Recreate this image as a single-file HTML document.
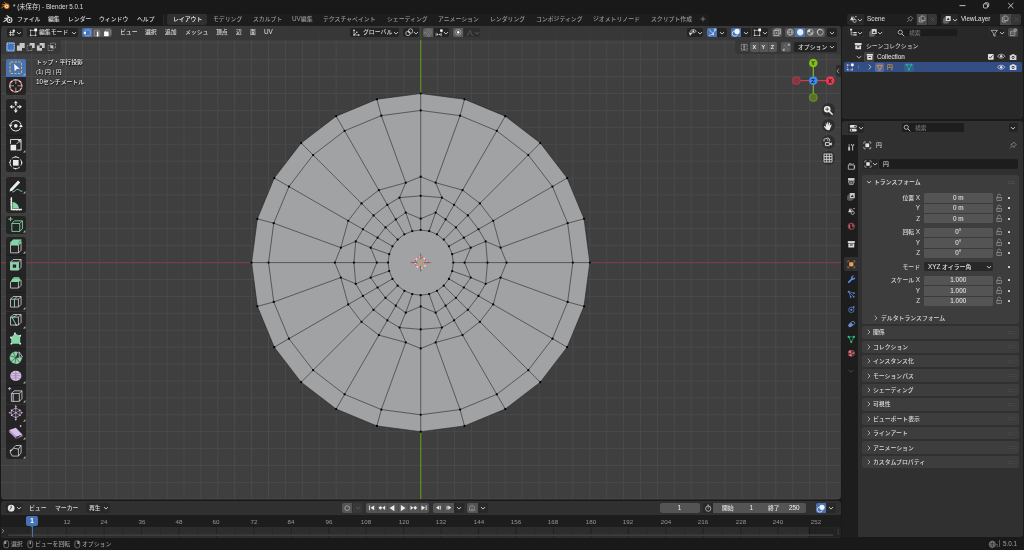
<!DOCTYPE html>
<html lang="ja"><head><meta charset="utf-8"><title>* (未保存) - Blender 5.0.1</title>
<style>
html,body{margin:0;padding:0;}
body{width:1024px;height:550px;overflow:hidden;position:relative;background:#191919;font-family:"Liberation Sans","Noto Sans CJK JP",sans-serif;-webkit-font-smoothing:antialiased;}
body>div,body>span,body>svg{position:absolute;display:block;}
.t{white-space:nowrap;height:10px;will-change:transform;font-weight:500;}
.l{font-size:1.08em;-webkit-text-stroke:0.05px currentColor;}
svg{overflow:visible;}
</style></head><body>
<div style="left:0px;top:0px;width:1024px;height:13px;background:#191919;"></div>
<div style="left:0px;top:13px;width:1024px;height:13px;background:#191919;"></div>
<div style="left:163.5px;top:14px;width:545px;height:12px;background:#1d1d1d;border-radius:0 3px 0 0;"></div>
<svg style="left:0px;top:0px;" width="1024" height="550" viewBox="0 0 1024 550"><defs><clipPath id="vpc"><rect x="1.1" y="26" width="839.7" height="473.3" rx="3.2"/></clipPath></defs><g clip-path="url(#vpc)"><rect x="0" y="20" width="845" height="485" fill="#3f3f3f"/><path d="M-2.05 26.0 V499.3 M14.86 26.0 V499.3 M31.77 26.0 V499.3 M48.68 26.0 V499.3 M65.59 26.0 V499.3 M82.50 26.0 V499.3 M99.41 26.0 V499.3 M116.32 26.0 V499.3 M133.23 26.0 V499.3 M150.14 26.0 V499.3 M167.05 26.0 V499.3 M183.96 26.0 V499.3 M200.87 26.0 V499.3 M217.78 26.0 V499.3 M234.69 26.0 V499.3 M251.60 26.0 V499.3 M268.51 26.0 V499.3 M285.42 26.0 V499.3 M302.33 26.0 V499.3 M319.24 26.0 V499.3 M336.15 26.0 V499.3 M353.06 26.0 V499.3 M369.97 26.0 V499.3 M386.88 26.0 V499.3 M403.79 26.0 V499.3 M420.70 26.0 V499.3 M437.61 26.0 V499.3 M454.52 26.0 V499.3 M471.43 26.0 V499.3 M488.34 26.0 V499.3 M505.25 26.0 V499.3 M522.16 26.0 V499.3 M539.07 26.0 V499.3 M555.98 26.0 V499.3 M572.89 26.0 V499.3 M589.80 26.0 V499.3 M606.71 26.0 V499.3 M623.62 26.0 V499.3 M640.53 26.0 V499.3 M657.44 26.0 V499.3 M674.35 26.0 V499.3 M691.26 26.0 V499.3 M708.17 26.0 V499.3 M725.08 26.0 V499.3 M741.99 26.0 V499.3 M758.90 26.0 V499.3 M775.81 26.0 V499.3 M792.72 26.0 V499.3 M809.63 26.0 V499.3 M826.54 26.0 V499.3 M843.45 26.0 V499.3 M1.1 25.86 H840.8 M1.1 42.77 H840.8 M1.1 59.68 H840.8 M1.1 76.59 H840.8 M1.1 93.50 H840.8 M1.1 110.41 H840.8 M1.1 127.32 H840.8 M1.1 144.23 H840.8 M1.1 161.14 H840.8 M1.1 178.05 H840.8 M1.1 194.96 H840.8 M1.1 211.87 H840.8 M1.1 228.78 H840.8 M1.1 245.69 H840.8 M1.1 262.60 H840.8 M1.1 279.51 H840.8 M1.1 296.42 H840.8 M1.1 313.33 H840.8 M1.1 330.24 H840.8 M1.1 347.15 H840.8 M1.1 364.06 H840.8 M1.1 380.97 H840.8 M1.1 397.88 H840.8 M1.1 414.79 H840.8 M1.1 431.70 H840.8 M1.1 448.61 H840.8 M1.1 465.52 H840.8 M1.1 482.43 H840.8 M1.1 499.34 H840.8" stroke="#4a4a4a" stroke-width="1" fill="none"/><path d="M1.1 262.60 H840.8" stroke="#7c3b48" stroke-width="1.3" fill="none"/><path d="M420.70 26.0 V499.3" stroke="#5e8b1f" stroke-width="1.3" fill="none"/><polygon points="420.70,93.50 464.47,99.26 505.25,116.16 540.27,143.03 567.14,178.05 584.04,218.83 589.80,262.60 584.04,306.37 567.14,347.15 540.27,382.17 505.25,409.04 464.47,425.94 420.70,431.70 376.93,425.94 336.15,409.04 301.13,382.17 274.26,347.15 257.36,306.37 251.60,262.60 257.36,218.83 274.26,178.05 301.13,143.03 336.15,116.16 376.93,99.26" fill="#a1a2a4"/>
<path d="M420.70 230.00 L429.14 231.11 L437.00 234.37 L443.75 239.55 L448.93 246.30 L452.19 254.16 L453.30 262.60 L452.19 271.04 L448.93 278.90 L443.75 285.65 L437.00 290.83 L429.14 294.09 L420.70 295.20 L412.26 294.09 L404.40 290.83 L397.65 285.65 L392.47 278.90 L389.21 271.04 L388.10 262.60 L389.21 254.16 L392.47 246.30 L397.65 239.55 L404.40 234.37 L412.26 231.11Z M420.70 218.73 L435.64 212.55 L445.60 219.47 L455.91 227.39 L463.83 237.70 L470.75 247.66 L464.57 262.60 L470.75 277.54 L463.83 287.50 L455.91 297.81 L445.60 305.73 L435.64 312.65 L420.70 306.47 L405.76 312.65 L395.80 305.73 L385.49 297.81 L377.57 287.50 L370.65 277.54 L376.83 262.60 L370.65 247.66 L377.57 237.70 L385.49 227.39 L395.80 219.47 L405.76 212.55Z M420.70 195.82 L441.90 197.64 L454.05 204.84 L467.86 215.44 L478.46 229.25 L485.66 241.40 L487.48 262.60 L485.66 283.80 L478.46 295.95 L467.86 309.76 L454.05 320.36 L441.90 327.56 L420.70 329.38 L399.50 327.56 L387.35 320.36 L373.54 309.76 L362.94 295.95 L355.74 283.80 L353.92 262.60 L355.74 241.40 L362.94 229.25 L373.54 215.44 L387.35 204.84 L399.50 197.64Z M420.70 176.73 L435.64 182.73 L462.55 190.11 L479.88 203.42 L493.19 220.75 L500.57 247.66 L506.57 262.60 L500.57 277.54 L493.19 304.45 L479.88 321.78 L462.55 335.09 L435.64 342.47 L420.70 348.47 L405.76 342.47 L378.85 335.09 L361.52 321.78 L348.21 304.45 L340.83 277.54 L334.83 262.60 L340.83 247.66 L348.21 220.75 L361.52 203.42 L378.85 190.11 L405.76 182.73Z M420.70 110.45 L460.08 115.63 L496.77 130.83 L528.29 155.01 L552.47 186.53 L567.67 223.22 L572.85 262.60 L567.67 301.98 L552.47 338.68 L528.29 370.19 L496.77 394.37 L460.08 409.57 L420.70 414.75 L381.32 409.57 L344.62 394.37 L313.11 370.19 L288.93 338.68 L273.73 301.98 L268.55 262.60 L273.73 223.22 L288.93 186.53 L313.11 155.01 L344.62 130.83 L381.32 115.63Z M420.70 93.50 L464.47 99.26 L505.25 116.16 L540.27 143.03 L567.14 178.05 L584.04 218.83 L589.80 262.60 L584.04 306.37 L567.14 347.15 L540.27 382.17 L505.25 409.04 L464.47 425.94 L420.70 431.70 L376.93 425.94 L336.15 409.04 L301.13 382.17 L274.26 347.15 L257.36 306.37 L251.60 262.60 L257.36 218.83 L274.26 178.05 L301.13 143.03 L336.15 116.16 L376.93 99.26Z M420.70 230.00 L420.70 218.73 L420.70 195.82 L420.70 176.73 L420.70 110.45 L420.70 93.50 M429.14 231.11 L435.64 212.55 L441.90 197.64 L435.64 182.73 L460.08 115.63 L464.47 99.26 M437.00 234.37 L445.60 219.47 L454.05 204.84 L462.55 190.11 L496.77 130.83 L505.25 116.16 M443.75 239.55 L455.91 227.39 L467.86 215.44 L479.88 203.42 L528.29 155.01 L540.27 143.03 M448.93 246.30 L463.83 237.70 L478.46 229.25 L493.19 220.75 L552.47 186.53 L567.14 178.05 M452.19 254.16 L470.75 247.66 L485.66 241.40 L500.57 247.66 L567.67 223.22 L584.04 218.83 M453.30 262.60 L464.57 262.60 L487.48 262.60 L506.57 262.60 L572.85 262.60 L589.80 262.60 M452.19 271.04 L470.75 277.54 L485.66 283.80 L500.57 277.54 L567.67 301.98 L584.04 306.37 M448.93 278.90 L463.83 287.50 L478.46 295.95 L493.19 304.45 L552.47 338.68 L567.14 347.15 M443.75 285.65 L455.91 297.81 L467.86 309.76 L479.88 321.78 L528.29 370.19 L540.27 382.17 M437.00 290.83 L445.60 305.73 L454.05 320.36 L462.55 335.09 L496.77 394.37 L505.25 409.04 M429.14 294.09 L435.64 312.65 L441.90 327.56 L435.64 342.47 L460.08 409.57 L464.47 425.94 M420.70 295.20 L420.70 306.47 L420.70 329.38 L420.70 348.47 L420.70 414.75 L420.70 431.70 M412.26 294.09 L405.76 312.65 L399.50 327.56 L405.76 342.47 L381.32 409.57 L376.93 425.94 M404.40 290.83 L395.80 305.73 L387.35 320.36 L378.85 335.09 L344.62 394.37 L336.15 409.04 M397.65 285.65 L385.49 297.81 L373.54 309.76 L361.52 321.78 L313.11 370.19 L301.13 382.17 M392.47 278.90 L377.57 287.50 L362.94 295.95 L348.21 304.45 L288.93 338.68 L274.26 347.15 M389.21 271.04 L370.65 277.54 L355.74 283.80 L340.83 277.54 L273.73 301.98 L257.36 306.37 M388.10 262.60 L376.83 262.60 L353.92 262.60 L334.83 262.60 L268.55 262.60 L251.60 262.60 M389.21 254.16 L370.65 247.66 L355.74 241.40 L340.83 247.66 L273.73 223.22 L257.36 218.83 M392.47 246.30 L377.57 237.70 L362.94 229.25 L348.21 220.75 L288.93 186.53 L274.26 178.05 M397.65 239.55 L385.49 227.39 L373.54 215.44 L361.52 203.42 L313.11 155.01 L301.13 143.03 M404.40 234.37 L395.80 219.47 L387.35 204.84 L378.85 190.11 L344.62 130.83 L336.15 116.16 M412.26 231.11 L405.76 212.55 L399.50 197.64 L405.76 182.73 L381.32 115.63 L376.93 99.26" fill="none" stroke="#1c1c1c" stroke-width="0.55"/>
<g fill="#000"><circle cx="420.70" cy="230.00" r="1.12"/><circle cx="429.14" cy="231.11" r="1.12"/><circle cx="437.00" cy="234.37" r="1.12"/><circle cx="443.75" cy="239.55" r="1.12"/><circle cx="448.93" cy="246.30" r="1.12"/><circle cx="452.19" cy="254.16" r="1.12"/><circle cx="453.30" cy="262.60" r="1.12"/><circle cx="452.19" cy="271.04" r="1.12"/><circle cx="448.93" cy="278.90" r="1.12"/><circle cx="443.75" cy="285.65" r="1.12"/><circle cx="437.00" cy="290.83" r="1.12"/><circle cx="429.14" cy="294.09" r="1.12"/><circle cx="420.70" cy="295.20" r="1.12"/><circle cx="412.26" cy="294.09" r="1.12"/><circle cx="404.40" cy="290.83" r="1.12"/><circle cx="397.65" cy="285.65" r="1.12"/><circle cx="392.47" cy="278.90" r="1.12"/><circle cx="389.21" cy="271.04" r="1.12"/><circle cx="388.10" cy="262.60" r="1.12"/><circle cx="389.21" cy="254.16" r="1.12"/><circle cx="392.47" cy="246.30" r="1.12"/><circle cx="397.65" cy="239.55" r="1.12"/><circle cx="404.40" cy="234.37" r="1.12"/><circle cx="412.26" cy="231.11" r="1.12"/><circle cx="420.70" cy="218.73" r="1.12"/><circle cx="435.64" cy="212.55" r="1.12"/><circle cx="445.60" cy="219.47" r="1.12"/><circle cx="455.91" cy="227.39" r="1.12"/><circle cx="463.83" cy="237.70" r="1.12"/><circle cx="470.75" cy="247.66" r="1.12"/><circle cx="464.57" cy="262.60" r="1.12"/><circle cx="470.75" cy="277.54" r="1.12"/><circle cx="463.83" cy="287.50" r="1.12"/><circle cx="455.91" cy="297.81" r="1.12"/><circle cx="445.60" cy="305.73" r="1.12"/><circle cx="435.64" cy="312.65" r="1.12"/><circle cx="420.70" cy="306.47" r="1.12"/><circle cx="405.76" cy="312.65" r="1.12"/><circle cx="395.80" cy="305.73" r="1.12"/><circle cx="385.49" cy="297.81" r="1.12"/><circle cx="377.57" cy="287.50" r="1.12"/><circle cx="370.65" cy="277.54" r="1.12"/><circle cx="376.83" cy="262.60" r="1.12"/><circle cx="370.65" cy="247.66" r="1.12"/><circle cx="377.57" cy="237.70" r="1.12"/><circle cx="385.49" cy="227.39" r="1.12"/><circle cx="395.80" cy="219.47" r="1.12"/><circle cx="405.76" cy="212.55" r="1.12"/><circle cx="420.70" cy="195.82" r="1.12"/><circle cx="441.90" cy="197.64" r="1.12"/><circle cx="454.05" cy="204.84" r="1.12"/><circle cx="467.86" cy="215.44" r="1.12"/><circle cx="478.46" cy="229.25" r="1.12"/><circle cx="485.66" cy="241.40" r="1.12"/><circle cx="487.48" cy="262.60" r="1.12"/><circle cx="485.66" cy="283.80" r="1.12"/><circle cx="478.46" cy="295.95" r="1.12"/><circle cx="467.86" cy="309.76" r="1.12"/><circle cx="454.05" cy="320.36" r="1.12"/><circle cx="441.90" cy="327.56" r="1.12"/><circle cx="420.70" cy="329.38" r="1.12"/><circle cx="399.50" cy="327.56" r="1.12"/><circle cx="387.35" cy="320.36" r="1.12"/><circle cx="373.54" cy="309.76" r="1.12"/><circle cx="362.94" cy="295.95" r="1.12"/><circle cx="355.74" cy="283.80" r="1.12"/><circle cx="353.92" cy="262.60" r="1.12"/><circle cx="355.74" cy="241.40" r="1.12"/><circle cx="362.94" cy="229.25" r="1.12"/><circle cx="373.54" cy="215.44" r="1.12"/><circle cx="387.35" cy="204.84" r="1.12"/><circle cx="399.50" cy="197.64" r="1.12"/><circle cx="420.70" cy="176.73" r="1.12"/><circle cx="435.64" cy="182.73" r="1.12"/><circle cx="462.55" cy="190.11" r="1.12"/><circle cx="479.88" cy="203.42" r="1.12"/><circle cx="493.19" cy="220.75" r="1.12"/><circle cx="500.57" cy="247.66" r="1.12"/><circle cx="506.57" cy="262.60" r="1.12"/><circle cx="500.57" cy="277.54" r="1.12"/><circle cx="493.19" cy="304.45" r="1.12"/><circle cx="479.88" cy="321.78" r="1.12"/><circle cx="462.55" cy="335.09" r="1.12"/><circle cx="435.64" cy="342.47" r="1.12"/><circle cx="420.70" cy="348.47" r="1.12"/><circle cx="405.76" cy="342.47" r="1.12"/><circle cx="378.85" cy="335.09" r="1.12"/><circle cx="361.52" cy="321.78" r="1.12"/><circle cx="348.21" cy="304.45" r="1.12"/><circle cx="340.83" cy="277.54" r="1.12"/><circle cx="334.83" cy="262.60" r="1.12"/><circle cx="340.83" cy="247.66" r="1.12"/><circle cx="348.21" cy="220.75" r="1.12"/><circle cx="361.52" cy="203.42" r="1.12"/><circle cx="378.85" cy="190.11" r="1.12"/><circle cx="405.76" cy="182.73" r="1.12"/><circle cx="420.70" cy="110.45" r="1.12"/><circle cx="460.08" cy="115.63" r="1.12"/><circle cx="496.77" cy="130.83" r="1.12"/><circle cx="528.29" cy="155.01" r="1.12"/><circle cx="552.47" cy="186.53" r="1.12"/><circle cx="567.67" cy="223.22" r="1.12"/><circle cx="572.85" cy="262.60" r="1.12"/><circle cx="567.67" cy="301.98" r="1.12"/><circle cx="552.47" cy="338.68" r="1.12"/><circle cx="528.29" cy="370.19" r="1.12"/><circle cx="496.77" cy="394.37" r="1.12"/><circle cx="460.08" cy="409.57" r="1.12"/><circle cx="420.70" cy="414.75" r="1.12"/><circle cx="381.32" cy="409.57" r="1.12"/><circle cx="344.62" cy="394.37" r="1.12"/><circle cx="313.11" cy="370.19" r="1.12"/><circle cx="288.93" cy="338.68" r="1.12"/><circle cx="273.73" cy="301.98" r="1.12"/><circle cx="268.55" cy="262.60" r="1.12"/><circle cx="273.73" cy="223.22" r="1.12"/><circle cx="288.93" cy="186.53" r="1.12"/><circle cx="313.11" cy="155.01" r="1.12"/><circle cx="344.62" cy="130.83" r="1.12"/><circle cx="381.32" cy="115.63" r="1.12"/><circle cx="420.70" cy="93.50" r="1.12"/><circle cx="464.47" cy="99.26" r="1.12"/><circle cx="505.25" cy="116.16" r="1.12"/><circle cx="540.27" cy="143.03" r="1.12"/><circle cx="567.14" cy="178.05" r="1.12"/><circle cx="584.04" cy="218.83" r="1.12"/><circle cx="589.80" cy="262.60" r="1.12"/><circle cx="584.04" cy="306.37" r="1.12"/><circle cx="567.14" cy="347.15" r="1.12"/><circle cx="540.27" cy="382.17" r="1.12"/><circle cx="505.25" cy="409.04" r="1.12"/><circle cx="464.47" cy="425.94" r="1.12"/><circle cx="420.70" cy="431.70" r="1.12"/><circle cx="376.93" cy="425.94" r="1.12"/><circle cx="336.15" cy="409.04" r="1.12"/><circle cx="301.13" cy="382.17" r="1.12"/><circle cx="274.26" cy="347.15" r="1.12"/><circle cx="257.36" cy="306.37" r="1.12"/><circle cx="251.60" cy="262.60" r="1.12"/><circle cx="257.36" cy="218.83" r="1.12"/><circle cx="274.26" cy="178.05" r="1.12"/><circle cx="301.13" cy="143.03" r="1.12"/><circle cx="336.15" cy="116.16" r="1.12"/><circle cx="376.93" cy="99.26" r="1.12"/></g><circle cx="420.70" cy="262.60" r="5.5" fill="none" stroke="#e8e8e8" stroke-width="1.1"/><circle cx="420.70" cy="262.60" r="5.5" fill="none" stroke="#e0424c" stroke-width="1.1" stroke-dasharray="2.16 2.16"/><path d="M420.70 259.30 v-5.8 M420.70 265.90 v5.8 M417.40 262.60 h-5.8 M424.00 262.60 h5.8" stroke="#444" stroke-width="0.65"/><path d="M420.70 253.60 v-1.6 M420.70 271.60 v1.6" stroke="#7fc24a" stroke-width="0.9"/><path d="M411.70 262.60 h-1.6 M429.70 262.60 h1.6" stroke="#d8505a" stroke-width="0.9"/><circle cx="420.70" cy="262.60" r="1.5" fill="#f5921e"/></g><rect x="1.5" y="26.4" width="838.9" height="472.5" rx="2.9" fill="none" stroke="rgba(255,255,255,0.045)" stroke-width="0.8"/></svg>
<div style="left:1.1px;top:26px;width:839.7px;height:14.3px;background:rgba(52,52,52,0.73);border-radius:3.2px 3.2px 0 0;"></div>
<div style="left:1.1px;top:40.3px;width:60.4px;height:13.8px;background:rgba(52,52,52,0.73);border-radius:0 0 3px 0;"></div>
<div style="left:735px;top:40.3px;width:105.8px;height:13.8px;background:rgba(52,52,52,0.73);border-radius:0 0 0 3px;"></div>
<div style="left:7px;top:28px;width:15.6px;height:9.4px;background:rgba(30,30,30,0.78);border-radius:2px;"></div>
<svg style="left:8.3px;top:28.7px;" width="8" height="8" viewBox="0 0 16 16"><path d="M5 3 V14 M10 6 V14 M2 7 H13 M2 11.5 H13" stroke="#e6e6e6" stroke-width="1.3" fill="none"/><circle cx="11.5" cy="3.5" r="2.6" fill="#e6e6e6"/></svg>
<svg style="left:16.3px;top:29.7px;" width="6" height="6" viewBox="0 0 6 6"><path d="M1.25 2.30 L3 4.10 L4.75 2.30" fill="none" stroke="#c8c8c8" stroke-width="0.95" stroke-linecap="round" stroke-linejoin="round"/></svg>
<div style="left:27px;top:28px;width:51.3px;height:9.4px;background:rgba(30,30,30,0.78);border-radius:2px;"></div>
<svg style="left:28.75px;top:28.45px;" width="8.5" height="8.5" viewBox="0 0 16 16"><rect x="3" y="4.5" width="9.5" height="9.5" rx="1.5" fill="none" stroke="#dcdcdc" stroke-width="1.1"/><rect x="1.6" y="3" width="2.6" height="2.6" fill="#dcdcdc"/><rect x="1.6" y="12.6" width="2.6" height="2.6" fill="#dcdcdc"/><rect x="11.2" y="12.6" width="2.6" height="2.6" fill="#dcdcdc"/><rect x="10" y="1" width="5.2" height="5.2" fill="#fff"/></svg>
<span class="t" style="left:39.3px;top:27.3px;line-height:10px;font-size:5.87px;color:#dadada;">編集モード</span>
<svg style="left:71px;top:29.7px;" width="6" height="6" viewBox="0 0 6 6"><path d="M1.25 2.30 L3 4.10 L4.75 2.30" fill="none" stroke="#c8c8c8" stroke-width="0.95" stroke-linecap="round" stroke-linejoin="round"/></svg>
<div style="left:82px;top:28px;width:9.6px;height:9.4px;background:#4772b3;border-radius:2px 0 0 2px;"></div>
<div style="left:92.1px;top:28px;width:9.5px;height:9.4px;background:#565656;"></div>
<div style="left:102.1px;top:28px;width:9.9px;height:9.4px;background:#565656;border-radius:0 2px 2px 0;"></div>
<svg style="left:82.8px;top:28.7px;" width="8" height="8" viewBox="0 0 16 16"><rect x="4" y="2" width="10.5" height="11.5" rx="2.2" fill="none" stroke="#e8e8e8" stroke-width="1.1" opacity="0.75"/><rect x="1.6" y="5.6" width="4.2" height="4.2" fill="#fff"/></svg>
<svg style="left:92.8px;top:28.7px;" width="8" height="8" viewBox="0 0 16 16"><rect x="2.6" y="2.4" width="10.8" height="11.6" rx="2.4" fill="none" stroke="#e0e0e0" stroke-width="1.1" opacity="0.65"/><rect x="7.6" y="5" width="3.2" height="9.8" fill="#fff"/></svg>
<svg style="left:103px;top:28.7px;" width="8" height="8" viewBox="0 0 16 16"><rect x="5" y="1.6" width="9.6" height="9.6" rx="2.2" fill="none" stroke="#e0e0e0" stroke-width="1.1" opacity="0.65"/><rect x="2.2" y="5" width="9" height="9.4" fill="#fff"/></svg>
<span class="t" style="left:119.8px;top:27.3px;line-height:10px;font-size:5.87px;color:#dadada;">ビュー</span>
<span class="t" style="left:144.8px;top:27.3px;line-height:10px;font-size:5.87px;color:#dadada;">選択</span>
<span class="t" style="left:164.8px;top:27.3px;line-height:10px;font-size:5.87px;color:#dadada;">追加</span>
<span class="t" style="left:184.8px;top:27.3px;line-height:10px;font-size:5.87px;color:#dadada;">メッシュ</span>
<span class="t" style="left:215.8px;top:27.3px;line-height:10px;font-size:5.87px;color:#dadada;">頂点</span>
<span class="t" style="left:235.6px;top:27.3px;line-height:10px;font-size:5.87px;color:#dadada;">辺</span>
<span class="t" style="left:249.6px;top:27.3px;line-height:10px;font-size:5.87px;color:#dadada;">面</span>
<span class="t" style="left:263.6px;top:27.3px;line-height:10px;font-size:5.87px;color:#dadada;"><span class="l">UV</span></span>
<div style="left:350px;top:28px;width:49.3px;height:9.4px;background:rgba(30,30,30,0.78);border-radius:2px;"></div>
<svg style="left:351.5px;top:28.7px;" width="8" height="8" viewBox="0 0 16 16"><path d="M4 2 V12 H14" fill="none" stroke="#e0e0e0" stroke-width="1.3"/><path d="M4 12 L9 7" stroke="#e0e0e0" stroke-width="1.2"/><circle cx="4" cy="2.5" r="1.7" fill="#e0e0e0"/><circle cx="13.5" cy="12" r="1.7" fill="#e0e0e0"/><circle cx="9.5" cy="6.5" r="1.5" fill="#e0e0e0"/><circle cx="4" cy="12" r="1.6" fill="#e0e0e0"/></svg>
<span class="t" style="left:362.8px;top:27.3px;line-height:10px;font-size:5.87px;color:#dadada;">グローバル</span>
<svg style="left:392.5px;top:29.7px;" width="6" height="6" viewBox="0 0 6 6"><path d="M1.25 2.30 L3 4.10 L4.75 2.30" fill="none" stroke="#c8c8c8" stroke-width="0.95" stroke-linecap="round" stroke-linejoin="round"/></svg>
<div style="left:403px;top:28px;width:16.3px;height:9.4px;background:rgba(30,30,30,0.78);border-radius:2px;"></div>
<svg style="left:404.55px;top:28.45px;" width="8.5" height="8.5" viewBox="0 0 16 16"><circle cx="5.6" cy="10.2" r="4.2" fill="none" stroke="#e0e0e0" stroke-width="1.3"/><circle cx="10.4" cy="5.8" r="4.2" fill="none" stroke="#e0e0e0" stroke-width="1.3"/><circle cx="8" cy="8" r="1.3" fill="#e0e0e0"/></svg>
<svg style="left:413px;top:29.7px;" width="6" height="6" viewBox="0 0 6 6"><path d="M1.25 2.30 L3 4.10 L4.75 2.30" fill="none" stroke="#c8c8c8" stroke-width="0.95" stroke-linecap="round" stroke-linejoin="round"/></svg>
<div style="left:423px;top:28px;width:10px;height:9.4px;background:#5c5c5c;border-radius:2px 0 0 2px;"></div>
<svg style="left:423.6px;top:28.3px;" width="8.8" height="8.8" viewBox="0 0 16 16"><g transform="rotate(40 8 8)"><path d="M2.8 14 V7.6 A5.2 5.2 0 0 1 13.2 7.6 V14 H9.8 V7.8 A1.8 1.8 0 0 0 6.2 7.8 V14 Z" fill="none" stroke="#8a8a8a" stroke-width="1.1" stroke-linejoin="round"/><path d="M2.8 11.4 H6.2 M9.8 11.4 H13.2" stroke="#8a8a8a" stroke-width="0.9"/></g></svg>
<div style="left:433.5px;top:28px;width:15.8px;height:9.4px;background:rgba(30,30,30,0.78);border-radius:0 2px 2px 0;"></div>
<svg style="left:434.5px;top:28.7px;" width="8" height="8" viewBox="0 0 16 16"><path d="M2.2 7.5 V14.5 M12.6 7.5 V14.5" stroke="#e0e0e0" stroke-width="1.2" fill="none"/><path d="M3.8 8.4 L7.4 11 L3.8 13.6 Z M11 8.4 L7.4 11 L11 13.6 Z" fill="#e0e0e0"/><rect x="10.4" y="0.8" width="4.8" height="4.8" fill="#fff"/></svg>
<svg style="left:443px;top:29.7px;" width="6" height="6" viewBox="0 0 6 6"><path d="M1.25 2.30 L3 4.10 L4.75 2.30" fill="none" stroke="#c8c8c8" stroke-width="0.95" stroke-linecap="round" stroke-linejoin="round"/></svg>
<div style="left:453px;top:28px;width:10px;height:9.4px;background:#5c5c5c;border-radius:2px 0 0 2px;"></div>
<svg style="left:453.75px;top:28.45px;" width="8.5" height="8.5" viewBox="0 0 16 16"><circle cx="8" cy="8" r="5.2" fill="none" stroke="#b8b8b8" stroke-width="1.2"/><circle cx="8" cy="8" r="2.2" fill="#fff"/></svg>
<div style="left:463.5px;top:28px;width:16.1px;height:9.4px;background:rgba(44,44,44,0.8);border-radius:0 2px 2px 0;"></div>
<svg style="left:465.5px;top:28.7px;" width="8" height="8" viewBox="0 0 16 16"><path d="M1.5 13.5 C6 13.5 6 2.5 8 2.5 C10 2.5 10 13.5 14.5 13.5" fill="none" stroke="#6a6a6a" stroke-width="1.2"/></svg>
<svg style="left:473.5px;top:29.7px;" width="6" height="6" viewBox="0 0 6 6"><path d="M1.25 2.30 L3 4.10 L4.75 2.30" fill="none" stroke="#5a5a5a" stroke-width="0.95" stroke-linecap="round" stroke-linejoin="round"/></svg>
<div style="left:687px;top:28px;width:16.3px;height:9.4px;background:rgba(30,30,30,0.78);border-radius:2px;"></div>
<svg style="left:688.35px;top:28.45px;" width="8.5" height="8.5" viewBox="0 0 16 16"><path d="M4.5 6 C7 2 13 2 15.5 6 C13 10 7 10 4.5 6 Z" fill="none" stroke="#e0e0e0" stroke-width="1.3"/><circle cx="10" cy="6" r="1.9" fill="#e0e0e0"/><path d="M1.5 8 L8.5 10.5 L5.5 12 L4 15 Z" fill="#e0e0e0"/></svg>
<svg style="left:697px;top:29.7px;" width="6" height="6" viewBox="0 0 6 6"><path d="M1.25 2.30 L3 4.10 L4.75 2.30" fill="none" stroke="#c8c8c8" stroke-width="0.95" stroke-linecap="round" stroke-linejoin="round"/></svg>
<div style="left:707px;top:28px;width:9.6px;height:9.4px;background:#4772b3;border-radius:2px 0 0 2px;"></div>
<svg style="left:707.55px;top:28.45px;" width="8.5" height="8.5" viewBox="0 0 16 16"><path d="M2 14 C8 13 12 9 13.5 2.5" fill="none" stroke="#f0f0f0" stroke-width="1.4"/><path d="M2 3 L9.5 10.5" stroke="#f0f0f0" stroke-width="1.4"/><path d="M11 2 H14.5 V5.5" fill="none" stroke="#f0f0f0" stroke-width="1.3"/><path d="M7.5 13 L11 10 L11.5 13.5 Z" fill="#f0f0f0"/></svg>
<div style="left:717.1px;top:28px;width:9.7px;height:9.4px;background:rgba(30,30,30,0.78);border-radius:0 2px 2px 0;"></div>
<svg style="left:719px;top:29.7px;" width="6" height="6" viewBox="0 0 6 6"><path d="M1.25 2.30 L3 4.10 L4.75 2.30" fill="none" stroke="#c8c8c8" stroke-width="0.95" stroke-linecap="round" stroke-linejoin="round"/></svg>
<div style="left:731px;top:28px;width:9.6px;height:9.4px;background:#4772b3;border-radius:2px 0 0 2px;"></div>
<svg style="left:731.55px;top:28.45px;" width="8.5" height="8.5" viewBox="0 0 16 16"><circle cx="9.5" cy="6.5" r="5" fill="#f4f4f4"/><path d="M4.6 5.6 A5 5 0 1 0 10.4 11.4" fill="none" stroke="#f4f4f4" stroke-width="1.4"/></svg>
<div style="left:741.1px;top:28px;width:9.7px;height:9.4px;background:rgba(30,30,30,0.78);border-radius:0 2px 2px 0;"></div>
<svg style="left:743px;top:29.7px;" width="6" height="6" viewBox="0 0 6 6"><path d="M1.25 2.30 L3 4.10 L4.75 2.30" fill="none" stroke="#c8c8c8" stroke-width="0.95" stroke-linecap="round" stroke-linejoin="round"/></svg>
<div style="left:752.3px;top:28px;width:16px;height:9.4px;background:rgba(30,30,30,0.78);border-radius:2px;"></div>
<svg style="left:753.35px;top:28.45px;" width="8.5" height="8.5" viewBox="0 0 16 16"><rect x="3" y="4.5" width="9.5" height="9.5" rx="1.5" fill="none" stroke="#dcdcdc" stroke-width="1.1"/><rect x="1.6" y="3" width="2.6" height="2.6" fill="#dcdcdc"/><rect x="1.6" y="12.6" width="2.6" height="2.6" fill="#dcdcdc"/><rect x="11.2" y="12.6" width="2.6" height="2.6" fill="#dcdcdc"/><rect x="10" y="1" width="5.2" height="5.2" fill="#fff"/></svg>
<svg style="left:762px;top:29.7px;" width="6" height="6" viewBox="0 0 6 6"><path d="M1.25 2.30 L3 4.10 L4.75 2.30" fill="none" stroke="#c8c8c8" stroke-width="0.95" stroke-linecap="round" stroke-linejoin="round"/></svg>
<div style="left:772px;top:28px;width:9.7px;height:9.4px;background:#565656;border-radius:2px;"></div>
<svg style="left:772.55px;top:28.45px;" width="8.5" height="8.5" viewBox="0 0 16 16"><rect x="2" y="5" width="9" height="9" fill="none" stroke="#d0d0d0" stroke-width="1.2"/><path d="M5 5 V2 H14 V11 H11" fill="none" stroke="#d0d0d0" stroke-width="1.2"/><path d="M6.5 8 V11 M5 9.5 H8" stroke="#d0d0d0" stroke-width="0.9"/></svg>
<div style="left:785px;top:28px;width:9.8px;height:9.4px;background:#565656;border-radius:2px 0 0 2px;"></div>
<div style="left:795.1px;top:28px;width:9.9px;height:9.4px;background:#4772b3;"></div>
<div style="left:805.3px;top:28px;width:9.7px;height:9.4px;background:#565656;"></div>
<div style="left:815.3px;top:28px;width:10px;height:9.4px;background:#565656;border-radius:0 2px 2px 0;"></div>
<svg style="left:785.65px;top:28.45px;" width="8.5" height="8.5" viewBox="0 0 16 16"><circle cx="8" cy="8" r="5.6" fill="none" stroke="#d8d8d8" stroke-width="1.1"/><ellipse cx="8" cy="8" rx="2.6" ry="5.6" fill="none" stroke="#d8d8d8" stroke-width="0.9"/><path d="M2.4 8 H13.6" stroke="#d8d8d8" stroke-width="0.9"/></svg>
<svg style="left:795.75px;top:28.45px;" width="8.5" height="8.5" viewBox="0 0 16 16"><circle cx="8" cy="8" r="5.9" fill="#e6ebf5"/></svg>
<svg style="left:805.95px;top:28.45px;" width="8.5" height="8.5" viewBox="0 0 16 16"><circle cx="8" cy="8" r="5.6" fill="none" stroke="#d8d8d8" stroke-width="1.1"/><path d="M8 8 V2.4 A5.6 5.6 0 0 0 2.4 8 Z" fill="#d8d8d8"/><path d="M8 8 H13.6 A5.6 5.6 0 0 1 8 13.6 Z" fill="#d8d8d8" opacity="0.55"/></svg>
<svg style="left:816.05px;top:28.45px;" width="8.5" height="8.5" viewBox="0 0 16 16"><circle cx="8" cy="8" r="5.6" fill="none" stroke="#d8d8d8" stroke-width="1.1"/><path d="M4 10.5 A4.5 4.5 0 0 1 10.5 4" fill="none" stroke="#d8d8d8" stroke-width="1.4"/></svg>
<div style="left:827px;top:28px;width:9.6px;height:9.4px;background:rgba(30,30,30,0.78);border-radius:2px;"></div>
<svg style="left:828.8px;top:29.7px;" width="6" height="6" viewBox="0 0 6 6"><path d="M1.25 2.30 L3 4.10 L4.75 2.30" fill="none" stroke="#c8c8c8" stroke-width="0.95" stroke-linecap="round" stroke-linejoin="round"/></svg>
<div style="left:6px;top:42.2px;width:9.4px;height:9.5px;background:#4772b3;border-radius:1.5px;"></div>
<svg style="left:6px;top:42.3px;" width="9.4" height="9.4" viewBox="0 0 16 16"><rect x="2" y="2" width="12" height="12" fill="none" stroke="#e8e8e8" stroke-width="1.5" stroke-dasharray="1.6 1.4"/></svg>
<svg style="left:16.3px;top:42.2px;" width="9.6" height="9.6" viewBox="0 0 16 16"><path d="M1.5 6 H6 V1.5 H14.5 V10 H10 V14.5 H1.5 Z" fill="#c8c8c8"/></svg>
<svg style="left:26.3px;top:42.2px;" width="9.6" height="9.6" viewBox="0 0 16 16"><path d="M6 1.5 H14.5 V10 H10 V6 H6 Z" fill="#c8c8c8"/><path d="M6 6 H1.8 V14.2 H10 V10" fill="none" stroke="#c8c8c8" stroke-width="1.1" stroke-dasharray="1.6 1.2"/></svg>
<svg style="left:36.3px;top:42.2px;" width="9.6" height="9.6" viewBox="0 0 16 16"><path d="M1.5 6 H6 V1.5 H14.5 V10 H10 V14.5 H1.5 Z M6 6 V10 H10 V6 Z" fill="#c8c8c8" fill-rule="evenodd"/></svg>
<svg style="left:46.5px;top:42.2px;" width="9.6" height="9.6" viewBox="0 0 16 16"><path d="M6 6 V1.8 H14.2 V10 H10 V14.2 H1.8 V6 Z" fill="none" stroke="#c8c8c8" stroke-width="1.1" stroke-dasharray="1.6 1.2"/><rect x="5.6" y="5.6" width="4.8" height="4.8" fill="#c8c8c8"/></svg>
<svg style="left:739.75px;top:42.85px;" width="8.5" height="8.5" viewBox="0 0 16 16"><path d="M7 3 L2.5 2 V14 L7 13 Z M9 3 L13.5 2 V14 L9 13 Z" fill="none" stroke="#dcdcdc" stroke-width="1.1" stroke-dasharray="2 1"/><path d="M8 1 V15" stroke="#dcdcdc" stroke-width="0.8" stroke-dasharray="1.5 1"/></svg>
<div style="left:750px;top:42.4px;width:8.6px;height:9.4px;background:#565656;border-radius:2px 0 0 2px;"></div>
<div style="left:759px;top:42.4px;width:8.6px;height:9.4px;background:#565656;"></div>
<div style="left:768px;top:42.4px;width:9px;height:9.4px;background:#565656;border-radius:0 2px 2px 0;"></div>
<span class="t" style="left:750px;top:42.1px;line-height:10px;font-size:5.5px;color:#e6e6e6;font-weight:bold;width:8.6px;text-align:center;">X</span>
<span class="t" style="left:759px;top:42.1px;line-height:10px;font-size:5.5px;color:#e6e6e6;font-weight:bold;width:8.6px;text-align:center;">Y</span>
<span class="t" style="left:768px;top:42.1px;line-height:10px;font-size:5.5px;color:#e6e6e6;font-weight:bold;width:9px;text-align:center;">Z</span>
<div style="left:758.5px;top:42.4px;width:0.5px;height:9.4px;background:#474747;"></div>
<div style="left:767.5px;top:42.4px;width:0.5px;height:9.4px;background:#474747;"></div>
<div style="left:781px;top:42.4px;width:10px;height:9.4px;background:#565656;border-radius:2px;"></div>
<svg style="left:781.75px;top:42.85px;" width="8.5" height="8.5" viewBox="0 0 16 16"><path d="M3 13 L13 3" stroke="#b0b0b0" stroke-width="1.1" stroke-dasharray="2 1.2"/><rect x="1.5" y="11" width="3.6" height="3.6" fill="#b0b0b0"/><rect x="11" y="1.5" width="3.6" height="3.6" fill="#b0b0b0"/><path d="M4 6 L7 3 M9 13 L12 10" stroke="#b0b0b0" stroke-width="1"/></svg>
<div style="left:794px;top:42.4px;width:42.6px;height:9.4px;background:rgba(30,30,30,0.78);border-radius:2px;"></div>
<span class="t" style="left:797.6px;top:41.9px;line-height:10px;font-size:5.87px;color:#dadada;">オプション</span>
<svg style="left:829.3px;top:44.1px;" width="6" height="6" viewBox="0 0 6 6"><path d="M1.25 2.30 L3 4.10 L4.75 2.30" fill="none" stroke="#c8c8c8" stroke-width="0.95" stroke-linecap="round" stroke-linejoin="round"/></svg>
<span class="t" style="left:36px;top:57.2px;line-height:10px;font-size:5.87px;color:#ececec;text-shadow:0 0 1.2px #000,0.4px 0.6px 1px rgba(0,0,0,0.8);">トップ・平行投影</span>
<span class="t" style="left:36px;top:66.9px;line-height:10px;font-size:5.87px;color:#ececec;text-shadow:0 0 1.2px #000,0.4px 0.6px 1px rgba(0,0,0,0.8);">(<span class="l">1</span>) 円 | 円</span>
<span class="t" style="left:36px;top:76.7px;line-height:10px;font-size:5.87px;color:#ececec;text-shadow:0 0 1.2px #000,0.4px 0.6px 1px rgba(0,0,0,0.8);"><span class="l">10</span>センチメートル</span>
<div style="left:6px;top:58.8px;width:20.1px;height:18.6px;background:#4772b3;border-radius:2.5px 2.5px 0 0;"></div>
<svg style="left:7.25px;top:58.75px;" width="17.6" height="17.6" viewBox="0 0 20 20"><rect x="3.5" y="3.5" width="13" height="13" rx="1" fill="none" stroke="#f2b13c" stroke-width="1.2" stroke-dasharray="2.6 1.6"/><path d="M8 5.5 L14.5 11 L11 11.3 L8.8 14.2 Z" fill="#f4f4f4"/></svg>
<svg style="left:22.7px;top:72.9px;" width="2.4" height="2.4" viewBox="0 0 2.4 2.4"><path d="M2.4 0 V2.4 H0 Z" fill="#b0b0b0"/></svg>
<div style="left:6px;top:77.4px;width:20.1px;height:17.5px;background:rgba(34,34,34,0.93);border-radius:0 0 2.5px 2.5px;"></div>
<svg style="left:7.25px;top:77.35px;" width="17.6" height="17.6" viewBox="0 0 20 20"><circle cx="10" cy="10" r="6.9" fill="none" stroke="#f0f0f0" stroke-width="1.3"/><circle cx="10" cy="10" r="6.9" fill="none" stroke="#d84a4a" stroke-width="1.3" stroke-dasharray="2.71 2.71"/><path d="M10 3.6 V8 M10 12 V16.4 M3.6 10 H8 M12 10 H16.4" stroke="#c8c8c8" stroke-width="0.8"/></svg>
<div style="left:6px;top:98.5px;width:20.1px;height:18.6px;background:rgba(34,34,34,0.93);border-radius:2.5px 2.5px 0 0;"></div>
<div style="left:6px;top:116.6px;width:20.1px;height:0.6px;background:rgba(0,0,0,0.22);"></div>
<svg style="left:7.25px;top:98.45px;" width="17.6" height="17.6" viewBox="0 0 20 20"><path d="M10 3 L12.3 6 H7.7 Z M10 17 L12.3 14 H7.7 Z M3 10 L6 7.7 V12.3 Z M17 10 L14 7.7 V12.3 Z" fill="#ececec"/><path d="M10 6 V8.4 M10 11.6 V14 M6 10 H8.4 M11.6 10 H14" stroke="#ececec" stroke-width="1.5"/></svg>
<div style="left:6px;top:117.1px;width:20.1px;height:18.6px;background:rgba(34,34,34,0.93);border-radius:0;"></div>
<div style="left:6px;top:135.2px;width:20.1px;height:0.6px;background:rgba(0,0,0,0.22);"></div>
<svg style="left:7.25px;top:117.05px;" width="17.6" height="17.6" viewBox="0 0 20 20"><path d="M4.2 8 A6.2 6.2 0 0 1 15.8 8 M15.8 12 A6.2 6.2 0 0 1 4.2 12" fill="none" stroke="#ececec" stroke-width="1.1"/><path d="M2 8.5 L6.2 8.5 L4.1 12 Z M18 11.5 L13.8 11.5 L15.9 8 Z" fill="#ececec"/><circle cx="10" cy="10" r="2.1" fill="#ececec"/></svg>
<div style="left:6px;top:135.7px;width:20.1px;height:18.6px;background:rgba(34,34,34,0.93);border-radius:0;"></div>
<div style="left:6px;top:153.8px;width:20.1px;height:0.6px;background:rgba(0,0,0,0.22);"></div>
<svg style="left:7.25px;top:135.65px;" width="17.6" height="17.6" viewBox="0 0 20 20"><path d="M4 4 H16 V16 H11" fill="none" stroke="#ececec" stroke-width="1"/><rect x="4" y="10" width="6.4" height="6.4" fill="#ececec"/><path d="M4 4 V9" stroke="#ececec" stroke-width="1"/><path d="M11 9 L15 5 M12.4 5 H15 V7.6" fill="none" stroke="#ececec" stroke-width="1"/></svg>
<svg style="left:22.7px;top:149.8px;" width="2.4" height="2.4" viewBox="0 0 2.4 2.4"><path d="M2.4 0 V2.4 H0 Z" fill="#b0b0b0"/></svg>
<div style="left:6px;top:154.3px;width:20.1px;height:17.5px;background:rgba(34,34,34,0.93);border-radius:0 0 2.5px 2.5px;"></div>
<svg style="left:7.25px;top:154.25px;" width="17.6" height="17.6" viewBox="0 0 20 20"><circle cx="10" cy="10" r="6.6" fill="none" stroke="#ececec" stroke-width="1.1" stroke-dasharray="3.2 2"/><rect x="6.8" y="6.8" width="6.4" height="6.4" fill="#ececec"/><path d="M10 2 L11.5 4 H8.5 Z M10 18 L11.5 16 H8.5 Z M2 10 L4 8.5 V11.5 Z M18 10 L16 8.5 V11.5 Z" fill="#ececec"/></svg>
<div style="left:6px;top:176.6px;width:20.1px;height:18.6px;background:rgba(34,34,34,0.93);border-radius:2.5px 2.5px 0 0;"></div>
<div style="left:6px;top:194.7px;width:20.1px;height:0.6px;background:rgba(0,0,0,0.22);"></div>
<svg style="left:7.25px;top:176.55px;" width="17.6" height="17.6" viewBox="0 0 20 20"><path d="M3.5 13.5 L12.5 4 L15 6.2 L6 15.6 L3 16.5 Z" fill="#ececec"/><path d="M6 17 C9 17.5 10 13.5 12.5 14 C14.5 14.5 15 17 17.5 16" fill="none" stroke="#86d6a8" stroke-width="1"/></svg>
<svg style="left:22.7px;top:190.7px;" width="2.4" height="2.4" viewBox="0 0 2.4 2.4"><path d="M2.4 0 V2.4 H0 Z" fill="#b0b0b0"/></svg>
<div style="left:6px;top:195.2px;width:20.1px;height:17.5px;background:rgba(34,34,34,0.93);border-radius:0 0 2.5px 2.5px;"></div>
<svg style="left:7.25px;top:195.15px;" width="17.6" height="17.6" viewBox="0 0 20 20"><path d="M5 2.5 V16.5 H17" fill="none" stroke="#ececec" stroke-width="1.6"/><path d="M6.2 15.4 V8 A7.4 7.4 0 0 1 13.6 15.4 Z" fill="#86d6a8"/><path d="M3.5 5 H5 M3.5 8 H5 M3.5 11 H5 M8 16.5 V18 M11 16.5 V18 M14 16.5 V18" stroke="#ececec" stroke-width="0.7"/></svg>
<div style="left:6px;top:216px;width:20.1px;height:17.5px;background:rgba(34,34,34,0.93);border-radius:2.5px;"></div>
<svg style="left:7.25px;top:215.95px;" width="17.6" height="17.6" viewBox="0 0 20 20"><g transform="translate(1.5 1.5)"><path d="M4 7 H13 V16 H4 Z M4 7 L7 4 H16 L13 7 M16 4 V13 L13 16" fill="none" stroke="#86d6a8" stroke-width="1" stroke-linejoin="round" opacity="1"/></g><path d="M4 1 V6 M1.5 3.5 H6.5" stroke="#86d6a8" stroke-width="1"/></svg>
<svg style="left:22.7px;top:230.1px;" width="2.4" height="2.4" viewBox="0 0 2.4 2.4"><path d="M2.4 0 V2.4 H0 Z" fill="#b0b0b0"/></svg>
<div style="left:6px;top:237.1px;width:20.1px;height:18.6px;background:rgba(34,34,34,0.93);border-radius:2.5px 2.5px 0 0;"></div>
<div style="left:6px;top:255.2px;width:20.1px;height:0.6px;background:rgba(0,0,0,0.22);"></div>
<svg style="left:7.25px;top:237.05px;" width="17.6" height="17.6" viewBox="0 0 20 20"><g transform="translate(0 2)"><path d="M4 7 H13 V16 H4 Z M4 7 L7 4 H16 L13 7 M16 4 V13 L13 16" fill="none" stroke="#ececec" stroke-width="0.8" stroke-linejoin="round" opacity="1"/></g><path d="M4 6 H13 L16 3 H7 Z M4 6 V9 H13 V6 M13 9 L16 6 V3" fill="#86d6a8" stroke="#86d6a8" stroke-width="0.6" stroke-linejoin="round"/></svg>
<svg style="left:22.7px;top:251.2px;" width="2.4" height="2.4" viewBox="0 0 2.4 2.4"><path d="M2.4 0 V2.4 H0 Z" fill="#b0b0b0"/></svg>
<div style="left:6px;top:255.7px;width:20.1px;height:18.6px;background:rgba(34,34,34,0.93);border-radius:0;"></div>
<div style="left:6px;top:273.8px;width:20.1px;height:0.6px;background:rgba(0,0,0,0.22);"></div>
<svg style="left:7.25px;top:255.65px;" width="17.6" height="17.6" viewBox="0 0 20 20"><path d="M4 7 H13 V16 H4 Z M4 7 L7 4 H16 L13 7 M16 4 V13 L13 16" fill="none" stroke="#ececec" stroke-width="0.8" stroke-linejoin="round" opacity="1"/><path d="M4 7 H13 V16 H4 Z M6.6 9.6 V13.4 H10.4 V9.6 Z" fill="#86d6a8" fill-rule="evenodd"/></svg>
<div style="left:6px;top:274.3px;width:20.1px;height:18.6px;background:rgba(34,34,34,0.93);border-radius:0;"></div>
<div style="left:6px;top:292.4px;width:20.1px;height:0.6px;background:rgba(0,0,0,0.22);"></div>
<svg style="left:7.25px;top:274.25px;" width="17.6" height="17.6" viewBox="0 0 20 20"><path d="M4 9 V16 H13 V9 M13 16 L16 13 V7" fill="none" stroke="#ececec" stroke-width="0.8"/><path d="M4 9 L6 5.5 H13 L16 7 L13 9 Z" fill="#86d6a8"/><path d="M6 5.5 L8 3.5 H13.5 L16 7" fill="#86d6a8" opacity="0.8"/></svg>
<div style="left:6px;top:292.9px;width:20.1px;height:18.6px;background:rgba(34,34,34,0.93);border-radius:0;"></div>
<div style="left:6px;top:311px;width:20.1px;height:0.6px;background:rgba(0,0,0,0.22);"></div>
<svg style="left:7.25px;top:292.85px;" width="17.6" height="17.6" viewBox="0 0 20 20"><path d="M4 7 H13 V16 H4 Z M4 7 L7 4 H16 L13 7 M16 4 V13 L13 16" fill="none" stroke="#ececec" stroke-width="0.8" stroke-linejoin="round" opacity="1"/><path d="M8.5 16 V7 L11.5 4" fill="none" stroke="#86d6a8" stroke-width="1.1"/></svg>
<svg style="left:22.7px;top:307px;" width="2.4" height="2.4" viewBox="0 0 2.4 2.4"><path d="M2.4 0 V2.4 H0 Z" fill="#b0b0b0"/></svg>
<div style="left:6px;top:311.5px;width:20.1px;height:18.6px;background:rgba(34,34,34,0.93);border-radius:0;"></div>
<div style="left:6px;top:329.6px;width:20.1px;height:0.6px;background:rgba(0,0,0,0.22);"></div>
<svg style="left:7.25px;top:311.45px;" width="17.6" height="17.6" viewBox="0 0 20 20"><path d="M4 7 H13 V16 H4 Z M4 7 L7 4 H16 L13 7 M16 4 V13 L13 16" fill="none" stroke="#ececec" stroke-width="0.8" stroke-linejoin="round" opacity="1"/><path d="M6 7.5 L10.5 16 M6 7.5 L11 5" fill="none" stroke="#86d6a8" stroke-width="1.1"/><circle cx="6" cy="7.5" r="1" fill="#86d6a8"/><circle cx="10.5" cy="16" r="1" fill="#86d6a8"/></svg>
<svg style="left:22.7px;top:325.6px;" width="2.4" height="2.4" viewBox="0 0 2.4 2.4"><path d="M2.4 0 V2.4 H0 Z" fill="#b0b0b0"/></svg>
<div style="left:6px;top:330.1px;width:20.1px;height:18.6px;background:rgba(34,34,34,0.93);border-radius:0;"></div>
<div style="left:6px;top:348.2px;width:20.1px;height:0.6px;background:rgba(0,0,0,0.22);"></div>
<svg style="left:7.25px;top:330.05px;" width="17.6" height="17.6" viewBox="0 0 20 20"><path d="M4.5 8.5 L9 4 L15 6.5 V15.5 H5 Z" fill="#86d6a8"/><g fill="#ececec"><circle cx="4.5" cy="8.5" r="1.1"/><circle cx="9" cy="4" r="1.1"/><circle cx="15" cy="6.5" r="1.1"/><circle cx="15" cy="15.5" r="1.1"/><circle cx="5" cy="15.5" r="1.1"/></g></svg>
<div style="left:6px;top:348.7px;width:20.1px;height:18.6px;background:rgba(34,34,34,0.93);border-radius:0;"></div>
<div style="left:6px;top:366.8px;width:20.1px;height:0.6px;background:rgba(0,0,0,0.22);"></div>
<svg style="left:7.25px;top:348.65px;" width="17.6" height="17.6" viewBox="0 0 20 20"><path d="M10 10 L12.5 3.4 A7 7 0 1 0 17 10 Z" fill="#86d6a8"/><path d="M10 10 L3.5 7.5 M10 10 L4.5 14.5 M10 10 L9 17 M10 10 L14.5 15.4 M10 10 L7 3.6" stroke="#2a2a2a" stroke-width="0.6"/><path d="M13.6 3.2 L17.6 9 L14 9.6 Z" fill="none" stroke="#ececec" stroke-width="0.8"/></svg>
<div style="left:6px;top:367.3px;width:20.1px;height:18.6px;background:rgba(34,34,34,0.93);border-radius:0;"></div>
<div style="left:6px;top:385.4px;width:20.1px;height:0.6px;background:rgba(0,0,0,0.22);"></div>
<svg style="left:7.25px;top:367.25px;" width="17.6" height="17.6" viewBox="0 0 20 20"><ellipse cx="10" cy="10" rx="6.4" ry="5.8" fill="#d9bfea"/><path d="M3.6 10 H16.4 M10 4.2 V15.8 M5 6.6 C8 8 12 8 15 6.6 M5 13.4 C8 12 12 12 15 13.4" stroke="#7a6a88" stroke-width="0.6" fill="none"/></svg>
<svg style="left:22.7px;top:381.4px;" width="2.4" height="2.4" viewBox="0 0 2.4 2.4"><path d="M2.4 0 V2.4 H0 Z" fill="#b0b0b0"/></svg>
<div style="left:6px;top:385.9px;width:20.1px;height:18.6px;background:rgba(34,34,34,0.93);border-radius:0;"></div>
<div style="left:6px;top:404px;width:20.1px;height:0.6px;background:rgba(0,0,0,0.22);"></div>
<svg style="left:7.25px;top:385.85px;" width="17.6" height="17.6" viewBox="0 0 20 20"><g transform="translate(1 1.5)"><path d="M4 7 H13 V16 H4 Z M4 7 L7 4 H16 L13 7 M16 4 V13 L13 16" fill="none" stroke="#ececec" stroke-width="0.8" stroke-linejoin="round" opacity="1"/></g><path d="M7 17.5 V8.5" stroke="#d9bfea" stroke-width="1.1"/><path d="M3 1.2 V4.8 M1.2 3 H4.8" stroke="#d9bfea" stroke-width="0.9"/></svg>
<svg style="left:22.7px;top:400px;" width="2.4" height="2.4" viewBox="0 0 2.4 2.4"><path d="M2.4 0 V2.4 H0 Z" fill="#b0b0b0"/></svg>
<div style="left:6px;top:404.5px;width:20.1px;height:18.6px;background:rgba(34,34,34,0.93);border-radius:0;"></div>
<div style="left:6px;top:422.6px;width:20.1px;height:0.6px;background:rgba(0,0,0,0.22);"></div>
<svg style="left:7.25px;top:404.45px;" width="17.6" height="17.6" viewBox="0 0 20 20"><path d="M10 4.5 L14.8 7.2 V12.8 L10 15.5 L5.2 12.8 V7.2 Z M10 4.5 V15.5 M5.2 7.2 L14.8 12.8 M14.8 7.2 L5.2 12.8" fill="none" stroke="#d9bfea" stroke-width="0.7"/><path d="M10 1 L11.4 3.2 H8.6 Z M10 19 L11.4 16.8 H8.6 Z M1.8 10 L4 8.6 V11.4 Z M18.2 10 L16 8.6 V11.4 Z" fill="#d9bfea"/><g fill="#d9bfea"><circle cx="10" cy="4.5" r="0.9"/><circle cx="14.8" cy="7.2" r="0.9"/><circle cx="14.8" cy="12.8" r="0.9"/><circle cx="10" cy="15.5" r="0.9"/><circle cx="5.2" cy="12.8" r="0.9"/><circle cx="5.2" cy="7.2" r="0.9"/></g></svg>
<svg style="left:22.7px;top:418.6px;" width="2.4" height="2.4" viewBox="0 0 2.4 2.4"><path d="M2.4 0 V2.4 H0 Z" fill="#b0b0b0"/></svg>
<div style="left:6px;top:423.1px;width:20.1px;height:18.6px;background:rgba(34,34,34,0.93);border-radius:0;"></div>
<div style="left:6px;top:441.2px;width:20.1px;height:0.6px;background:rgba(0,0,0,0.22);"></div>
<svg style="left:7.25px;top:423.05px;" width="17.6" height="17.6" viewBox="0 0 20 20"><path d="M2.5 8 L10 5.5 L17.5 13 L10.5 15.5 Z" fill="#d9bfea"/><path d="M2.5 8 V10.4 L10.5 17.8 V15.5 M10.5 17.8 L17.5 15.2 V13" fill="#c4a8d8" stroke="#5a4a68" stroke-width="0.5"/><path d="M15.5 2 L16.6 3.4 L15.5 4.8 L14.4 3.4 Z" fill="#d9bfea"/></svg>
<svg style="left:22.7px;top:437.2px;" width="2.4" height="2.4" viewBox="0 0 2.4 2.4"><path d="M2.4 0 V2.4 H0 Z" fill="#b0b0b0"/></svg>
<div style="left:6px;top:441.7px;width:20.1px;height:17.5px;background:rgba(34,34,34,0.93);border-radius:0 0 2.5px 2.5px;"></div>
<svg style="left:7.25px;top:441.65px;" width="17.6" height="17.6" viewBox="0 0 20 20"><path d="M7 7 L10 4 H16 V12.5 L13 16 H6 L3.5 11.5 Z" fill="none" stroke="#ececec" stroke-width="0.8" stroke-linejoin="round"/><path d="M13 16 V8 L16 4 M13 8 L7 7" fill="none" stroke="#ececec" stroke-width="0.8"/><path d="M3 9 L7.5 8 L3.5 11.5 Z" fill="#d9bfea"/></svg>
<svg style="left:22.7px;top:455.8px;" width="2.4" height="2.4" viewBox="0 0 2.4 2.4"><path d="M2.4 0 V2.4 H0 Z" fill="#b0b0b0"/></svg>
<svg style="left:0px;top:0px;" width="1024" height="550" viewBox="0 0 1024 550"><path d="M813.3 66.7 V93.5" stroke="#7dbb1c" stroke-width="1.2"/><path d="M800.4 80.6 H827.2" stroke="#d83a50" stroke-width="1.2"/><circle cx="796.4" cy="80.6" r="4" fill="rgba(220,50,75,0.42)" stroke="#c8384c" stroke-width="0.7"/><circle cx="813.3" cy="97.5" r="4" fill="rgba(125,185,25,0.42)" stroke="#74a81c" stroke-width="0.7"/><circle cx="813.3" cy="63.0" r="4.3" fill="#7fbf1a"/><circle cx="830.2" cy="80.6" r="4.3" fill="#e83a52"/><circle cx="813.3" cy="80.6" r="4.3" fill="#3a8cf0"/></svg>
<span class="t" style="left:808.3px;top:58.1px;line-height:10px;font-size:5.2px;color:#1a1a1a;font-weight:bold;width:10px;text-align:center;"><span class="l">Y</span></span>
<span class="t" style="left:825.2px;top:75.7px;line-height:10px;font-size:5.2px;color:#1a1a1a;font-weight:bold;width:10px;text-align:center;"><span class="l">X</span></span>
<span class="t" style="left:808.3px;top:75.7px;line-height:10px;font-size:5.2px;color:#1a1a1a;font-weight:bold;width:10px;text-align:center;"><span class="l">Z</span></span>
<div style="left:821.5px;top:103.1px;width:13.8px;height:13.8px;background:rgba(22,22,22,0.42);border-radius:50%;"></div>
<div style="left:821.5px;top:118.6px;width:13.8px;height:13.8px;background:rgba(22,22,22,0.42);border-radius:50%;"></div>
<div style="left:821.5px;top:135.1px;width:13.8px;height:13.8px;background:rgba(22,22,22,0.42);border-radius:50%;"></div>
<div style="left:821.5px;top:150.8px;width:13.8px;height:13.8px;background:rgba(22,22,22,0.42);border-radius:50%;"></div>
<svg style="left:823.4px;top:105px;" width="10" height="10" viewBox="0 0 10 10"><circle cx="4.2" cy="4.2" r="3.3" fill="#e8e8e8"/><path d="M6.6 6.6 L9.2 9.2" stroke="#e8e8e8" stroke-width="1.5" stroke-linecap="round"/><path d="M4.2 2.4 V6 M2.4 4.2 H6" stroke="#3a3a3a" stroke-width="0.8"/></svg>
<svg style="left:823.4px;top:120.5px;" width="10" height="10" viewBox="0 0 10 10"><path d="M3.1 6 L2.6 2.6 Q2.9 1.9 3.5 2.4 L4.1 4.6 L4.2 1.4 Q4.7 0.8 5.2 1.4 L5.4 4.5 L6.1 1.8 Q6.7 1.3 7.1 2 L6.7 5 L7.8 3.4 Q8.5 3.2 8.6 3.9 L7.6 6.6 Q7.2 9.3 5.2 9.3 Q3.6 9.3 2.4 7.6 L0.9 5.6 Q1.1 4.8 1.9 5.1 Z" fill="#ececec"/></svg>
<svg style="left:823.4px;top:137px;" width="10" height="10" viewBox="0 0 10 10"><path d="M2.4 5.6 H6.4 V8.6 H2.4 Z" fill="none" stroke="#e0e0e0" stroke-width="0.9"/><path d="M6.6 6.6 L8.8 5.6 V8.6 L6.6 7.6 Z" fill="#e0e0e0"/><path d="M1 4.6 V2.6 Q1 1.8 1.8 1.8 H3 L4.4 0.9 Q6.6 0.9 6.8 3.4 Q6.8 4.4 5.8 4.6" fill="none" stroke="#e0e0e0" stroke-width="0.8"/><path d="M4.8 1.6 V4" stroke="#e0e0e0" stroke-width="0.7"/></svg>
<svg style="left:823.4px;top:152.7px;" width="10" height="10" viewBox="0 0 10 10"><path d="M1 1 H9 V9 H1 Z M3.67 1 V9 M6.33 1 V9 M1 3.67 H9 M1 6.33 H9" fill="none" stroke="#e4e4e4" stroke-width="0.85"/></svg>
<div style="left:836px;top:64.6px;width:4.8px;height:12.2px;background:rgba(30,30,30,0.55);border-radius:2px 0 0 2px;"></div>
<svg style="left:836.2px;top:67.6px;" width="4" height="6" viewBox="0 0 4 6"><path d="M3 0.8 L0.9 3 L3 5.2" fill="none" stroke="#b0b0b0" stroke-width="0.8"/></svg>
<svg style="left:0.8px;top:1.3px;" width="8.8" height="8.8" viewBox="0 0 16 16"><path d="M6.4 2.6 L10 5.6 M2.8 6.7 H8.4 M1.3 12.2 L6.6 8.4" stroke="#ea7a18" stroke-width="1.7" stroke-linecap="round" fill="none"/><circle cx="10.4" cy="9.5" r="4.9" fill="#ea7a18"/><circle cx="10.4" cy="9.5" r="2.8" fill="#ffffff"/><circle cx="10.4" cy="9.5" r="1.5" fill="#2a6cb0"/></svg>
<span class="t" style="left:13px;top:1.6px;line-height:10px;font-size:6.3px;color:#dedede;font-weight:400;">* (未保存) - Blender 5.0.1</span>
<svg style="left:955px;top:0px;" width="66" height="13" viewBox="0 0 66 13"><path d="M4.5 5.6 H10.5" stroke="#e8e8e8" stroke-width="0.8"/><rect x="28.4" y="3.9" width="4.1" height="4.1" rx="0.9" fill="none" stroke="#e8e8e8" stroke-width="0.75"/><path d="M29.7 3.7 V3.4 Q29.7 2.8 30.4 2.8 H32.8 Q33.7 2.8 33.7 3.7 V6.1 Q33.7 6.8 33 6.8" fill="none" stroke="#e8e8e8" stroke-width="0.75"/><path d="M53.2 3 L58.4 8.2 M58.4 3 L53.2 8.2" stroke="#e8e8e8" stroke-width="0.8"/></svg>
<svg style="left:2.5px;top:13.6px;" width="10" height="10" viewBox="0 0 16 16"><path d="M6.4 2.6 L10 5.6 M2.8 6.7 H8.4 M1.3 12.2 L6.6 8.4" stroke="#e2e2e2" stroke-width="1.7" stroke-linecap="round" fill="none"/><circle cx="10.4" cy="9.5" r="4.7" fill="#e2e2e2"/><circle cx="10.4" cy="9.5" r="3.1" fill="#191919"/><circle cx="10.4" cy="9.5" r="1.5" fill="#e2e2e2"/></svg>
<span class="t" style="left:16.8px;top:14.2px;line-height:10px;font-size:5.87px;color:#dcdcdc;">ファイル</span>
<span class="t" style="left:47.8px;top:14.2px;line-height:10px;font-size:5.87px;color:#dcdcdc;">編集</span>
<span class="t" style="left:67.8px;top:14.2px;line-height:10px;font-size:5.87px;color:#dcdcdc;">レンダー</span>
<span class="t" style="left:98.8px;top:14.2px;line-height:10px;font-size:5.87px;color:#dcdcdc;">ウィンドウ</span>
<span class="t" style="left:136.8px;top:14.2px;line-height:10px;font-size:5.87px;color:#dcdcdc;">ヘルプ</span>
<div style="left:162.8px;top:14.5px;width:0.6px;height:10px;background:#2c2c2c;"></div>
<div style="left:167px;top:14.2px;width:39.5px;height:10.4px;background:#303030;border-radius:2.2px;"></div>
<span class="t" style="left:172.8px;top:14.2px;line-height:10px;font-size:5.87px;color:#f0f0f0;">レイアウト</span>
<span class="t" style="left:212.8px;top:14.2px;line-height:10px;font-size:5.87px;color:#989898;">モデリング</span>
<span class="t" style="left:252.8px;top:14.2px;line-height:10px;font-size:5.87px;color:#989898;">スカルプト</span>
<span class="t" style="left:291.8px;top:14.2px;line-height:10px;font-size:5.87px;color:#989898;"><span class="l">UV</span>編集</span>
<span class="t" style="left:322.8px;top:14.2px;line-height:10px;font-size:5.87px;color:#989898;">テクスチャペイント</span>
<span class="t" style="left:386.8px;top:14.2px;line-height:10px;font-size:5.87px;color:#989898;">シェーディング</span>
<span class="t" style="left:437.8px;top:14.2px;line-height:10px;font-size:5.87px;color:#989898;">アニメーション</span>
<span class="t" style="left:489.8px;top:14.2px;line-height:10px;font-size:5.87px;color:#989898;">レンダリング</span>
<span class="t" style="left:535.8px;top:14.2px;line-height:10px;font-size:5.87px;color:#989898;">コンポジティング</span>
<span class="t" style="left:592.8px;top:14.2px;line-height:10px;font-size:5.87px;color:#989898;">ジオメトリノード</span>
<span class="t" style="left:650.8px;top:14.2px;line-height:10px;font-size:5.87px;color:#989898;">スクリプト作成</span>
<svg style="left:700px;top:16.4px;" width="6" height="6" viewBox="0 0 6 6"><path d="M3 0.6 V5.4 M0.6 3 H5.4" stroke="#909090" stroke-width="0.7"/></svg>
<div style="left:846.5px;top:14.2px;width:90.8px;height:10.4px;background:#282828;border-radius:2.2px;"></div>
<div style="left:863.8px;top:14.2px;width:52.6px;height:10.4px;background:#1f1f1f;"></div>
<svg style="left:848.75px;top:15.05px;" width="8.5" height="8.5" viewBox="0 0 16 16"><path d="M5.5 2 L9 10 H2 Z" fill="#d8d8d8"/><circle cx="10.5" cy="11" r="3" fill="none" stroke="#d8d8d8" stroke-width="1.3"/><path d="M8 3 L11 9" stroke="#d8d8d8" stroke-width="1.4"/><circle cx="13" cy="3" r="1.3" fill="#d8d8d8"/></svg>
<svg style="left:857px;top:16.6px;" width="6" height="6" viewBox="0 0 6 6"><path d="M1.25 2.30 L3 4.10 L4.75 2.30" fill="none" stroke="#c8c8c8" stroke-width="0.95" stroke-linecap="round" stroke-linejoin="round"/></svg>
<span class="t" style="left:867.2px;top:14.2px;line-height:10px;font-size:5.87px;color:#d8d8d8;"><span class="l">Scene</span></span>
<svg style="left:906px;top:15.4px;" width="8" height="8" viewBox="0 0 16 16"><path d="M9 2 L14 7 L12.5 7.5 L10 10 L10 12.5 L3.5 6 L6 6 L8.5 3.5 Z" fill="none" stroke="#a8a8a8" stroke-width="1.1" stroke-linejoin="round"/><path d="M6.5 9.5 L2 14" stroke="#a8a8a8" stroke-width="1.1"/></svg>
<div style="left:916.6px;top:14.2px;width:10.6px;height:10.4px;background:#4a4a4a;"></div>
<svg style="left:917.8px;top:15.3px;" width="8" height="8" viewBox="0 0 16 16"><path d="M6 2 H11 L14 5 V11 H6 Z" fill="none" stroke="#d0d0d0" stroke-width="1.2"/><path d="M4 5 H2.5 V14 H10 V12.5" fill="none" stroke="#d0d0d0" stroke-width="1.2"/></svg>
<div style="left:927.6px;top:14.2px;width:9.7px;height:10.4px;background:#363636;border-radius:0 2.2px 2.2px 0;"></div>
<svg style="left:929.8px;top:16.8px;" width="5" height="5" viewBox="0 0 5 5"><path d="M0.6 0.6 L4.4 4.4 M4.4 0.6 L0.6 4.4" stroke="#555" stroke-width="0.7"/></svg>
<div style="left:941.2px;top:14.2px;width:80.3px;height:10.4px;background:#282828;border-radius:2.2px;"></div>
<div style="left:958.2px;top:14.2px;width:41.6px;height:10.4px;background:#1f1f1f;"></div>
<svg style="left:943.35px;top:15.05px;" width="8.5" height="8.5" viewBox="0 0 16 16"><rect x="5" y="2" width="9.5" height="9.5" rx="1" fill="#d8d8d8"/><path d="M3.5 4.5 V13 H12 M1.5 6.5 V15 H10" fill="none" stroke="#d8d8d8" stroke-width="1.1" opacity="0.75"/><path d="M7 9.5 L9.8 5 L12.6 9.5 Z" fill="#282828"/></svg>
<svg style="left:951.6px;top:16.6px;" width="6" height="6" viewBox="0 0 6 6"><path d="M1.25 2.30 L3 4.10 L4.75 2.30" fill="none" stroke="#c8c8c8" stroke-width="0.95" stroke-linecap="round" stroke-linejoin="round"/></svg>
<span class="t" style="left:961.2px;top:14.2px;line-height:10px;font-size:5.87px;color:#d8d8d8;"><span class="l">ViewLayer</span></span>
<div style="left:1000px;top:14.2px;width:10.8px;height:10.4px;background:#4a4a4a;"></div>
<svg style="left:1001.3px;top:15.3px;" width="8" height="8" viewBox="0 0 16 16"><path d="M6 2 H11 L14 5 V11 H6 Z" fill="none" stroke="#d0d0d0" stroke-width="1.2"/><path d="M4 5 H2.5 V14 H10 V12.5" fill="none" stroke="#d0d0d0" stroke-width="1.2"/></svg>
<div style="left:1011.2px;top:14.2px;width:10.3px;height:10.4px;background:#363636;border-radius:0 2.2px 2.2px 0;"></div>
<svg style="left:1013.8px;top:16.8px;" width="5" height="5" viewBox="0 0 5 5"><path d="M0.6 0.6 L4.4 4.4 M4.4 0.6 L0.6 4.4" stroke="#555" stroke-width="0.7"/></svg>
<div style="left:842.3px;top:25.9px;width:180.6px;height:93.6px;background:#282828;border-radius:3px;"></div>
<div style="left:848px;top:28px;width:15.6px;height:9.4px;background:#232323;border-radius:2px;box-shadow:inset 0 0 0 0.5px #3a3a3a;"></div>
<svg style="left:849.15px;top:28.45px;" width="8.5" height="8.5" viewBox="0 0 16 16"><rect x="2" y="1.5" width="4" height="3.4" fill="#e0e0e0"/><path d="M4 5 V13 H7 M4 9 H7" fill="none" stroke="#e0e0e0" stroke-width="1.2"/><path d="M8 8.8 H14.5 M8 13 H14.5" stroke="#e0e0e0" stroke-width="2.2"/></svg>
<svg style="left:857.4px;top:29.9px;" width="6" height="6" viewBox="0 0 6 6"><path d="M1.25 2.30 L3 4.10 L4.75 2.30" fill="none" stroke="#c8c8c8" stroke-width="0.95" stroke-linecap="round" stroke-linejoin="round"/></svg>
<div style="left:867.2px;top:28px;width:16px;height:9.4px;background:#232323;border-radius:2px;box-shadow:inset 0 0 0 0.5px #3a3a3a;"></div>
<svg style="left:868.55px;top:28.45px;" width="8.5" height="8.5" viewBox="0 0 16 16"><rect x="5" y="2" width="9.5" height="9.5" rx="1" fill="#d0d0d0"/><path d="M3.5 4.5 V13 H12 M1.5 6.5 V15 H10" fill="none" stroke="#d0d0d0" stroke-width="1.1" opacity="0.75"/><path d="M7 9.5 L9.8 5 L12.6 9.5 Z" fill="#282828"/></svg>
<svg style="left:877px;top:29.9px;" width="6" height="6" viewBox="0 0 6 6"><path d="M1.25 2.30 L3 4.10 L4.75 2.30" fill="none" stroke="#c8c8c8" stroke-width="0.95" stroke-linecap="round" stroke-linejoin="round"/></svg>
<div style="left:896px;top:28px;width:61.6px;height:9.4px;background:#1c1c1c;border-radius:2px;box-shadow:inset 0 0 0 0.5px #333;"></div>
<svg style="left:897px;top:28.8px;" width="8" height="8" viewBox="0 0 16 16"><circle cx="6.5" cy="6.5" r="4.2" fill="none" stroke="#d8d8d8" stroke-width="1.5"/><path d="M9.6 9.6 L14.5 14.5" stroke="#d8d8d8" stroke-width="1.7"/></svg>
<span class="t" style="left:908.6px;top:27.7px;line-height:10px;font-size:5.87px;color:#6e6e6e;">検索</span>
<div style="left:989.4px;top:28px;width:16px;height:9.4px;background:#232323;border-radius:2px;box-shadow:inset 0 0 0 0.5px #3a3a3a;"></div>
<svg style="left:990.35px;top:28.55px;" width="8.5" height="8.5" viewBox="0 0 16 16"><path d="M2 2.5 H14 L9.5 8 V13.5 L6.5 12 V8 Z" fill="none" stroke="#d8d8d8" stroke-width="1.3" stroke-linejoin="round"/></svg>
<svg style="left:998.8px;top:29.9px;" width="6" height="6" viewBox="0 0 6 6"><path d="M1.25 2.30 L3 4.10 L4.75 2.30" fill="none" stroke="#c8c8c8" stroke-width="0.95" stroke-linecap="round" stroke-linejoin="round"/></svg>
<div style="left:1008.2px;top:28px;width:10px;height:9.4px;background:#4a4a4a;border-radius:2px;"></div>
<svg style="left:1008.95px;top:28.45px;" width="8.5" height="8.5" viewBox="0 0 16 16"><path d="M3 6 H11 V14 H3 Z" fill="none" stroke="#bdbdbd" stroke-width="1.2"/><path d="M5 9.5 H9" stroke="#bdbdbd" stroke-width="1.1"/><circle cx="12" cy="4" r="2.6" fill="none" stroke="#bdbdbd" stroke-width="1.1"/><path d="M12 2.6 V5.4 M10.6 4 H13.4" stroke="#bdbdbd" stroke-width="0.9"/></svg>
<svg style="left:854.4px;top:41.8px;" width="8.4" height="8.4" viewBox="0 0 16 16"><rect x="1.5" y="2" width="13" height="3.6" fill="#e4e4e4"/><path d="M2.5 6.5 H13.5 V14 H2.5 Z M5.5 8.2 V10.4 H10.5 V8.2 Z" fill="#e4e4e4" fill-rule="evenodd"/></svg>
<span class="t" style="left:865.8px;top:41.2px;line-height:10px;font-size:5.87px;color:#c4c4c4;">シーンコレクション</span>
<svg style="left:856.2px;top:54.2px;" width="6" height="6" viewBox="0 0 6 6"><path d="M0.99 2.17 L3 4.24 L5.01 2.17" fill="none" stroke="#b8b8b8" stroke-width="0.95" stroke-linecap="round" stroke-linejoin="round"/></svg>
<div style="left:864.3px;top:52.2px;width:10px;height:10px;background:#3a3a3a;border-radius:2px;box-shadow:inset 0 0 0 0.5px #555;"></div>
<svg style="left:865.5px;top:53.4px;" width="7.6" height="7.6" viewBox="0 0 16 16"><rect x="1.5" y="2" width="13" height="3.6" fill="#e4e4e4"/><path d="M2.5 6.5 H13.5 V14 H2.5 Z M5.5 8.2 V10.4 H10.5 V8.2 Z" fill="#e4e4e4" fill-rule="evenodd"/></svg>
<span class="t" style="left:876.8px;top:52.2px;line-height:10px;font-size:5.87px;color:#e0e0e0;"><span class="l">Collection</span></span>
<svg style="left:987.3px;top:52.8px;" width="7.6" height="7.6" viewBox="0 0 16 16"><rect x="2" y="2" width="12" height="12" rx="1.5" fill="#e4e4e4"/><path d="M4.5 8 L7 10.8 L11.8 4.8" fill="none" stroke="#282828" stroke-width="1.8"/></svg>
<svg style="left:997.4px;top:52.2px;" width="8.4" height="8.4" viewBox="0 0 16 16"><path d="M1 8 C4 3 12 3 15 8 C12 13 4 13 1 8 Z" fill="none" stroke="#d8d8d8" stroke-width="1.3"/><circle cx="8" cy="8" r="2.4" fill="#d8d8d8"/></svg>
<svg style="left:1008.5px;top:52.5px;" width="8.2" height="8.2" viewBox="0 0 16 16"><path d="M1.5 4.5 H4.5 L5.5 2.5 H10.5 L11.5 4.5 H14.5 V13.5 H1.5 Z" fill="#d8d8d8"/><circle cx="8" cy="8.8" r="2.8" fill="#282828"/><circle cx="8" cy="8.8" r="1.5" fill="#d8d8d8"/></svg>
<div style="left:844.1px;top:62.4px;width:177.6px;height:9.5px;background:#334e83;border-radius:1.5px;"></div>
<svg style="left:845.5px;top:63.1px;" width="8.2" height="8.2" viewBox="0 0 16 16"><rect x="3" y="4" width="9.5" height="9.5" fill="none" stroke="#b8c4dc" stroke-width="1.2" stroke-dasharray="2.4 1.2"/><rect x="1.5" y="2.5" width="3" height="3" fill="#b8c4dc"/><rect x="1.5" y="11.5" width="3" height="3" fill="#b8c4dc"/><rect x="10.5" y="11.5" width="3" height="3" fill="#b8c4dc"/><rect x="10" y="1" width="5" height="5" fill="#fff"/></svg>
<div style="left:858.2px;top:64.8px;width:0.5px;height:4.6px;background:#566a94;"></div>
<svg style="left:866.6px;top:64.2px;" width="6" height="6" viewBox="0 0 6 6"><path d="M1.90 0.80 L4.10 3 L1.90 5.20" fill="none" stroke="#c8d0e0" stroke-width="0.8" stroke-linecap="round" stroke-linejoin="round"/></svg>
<div style="left:875px;top:62.8px;width:9.4px;height:8.8px;background:rgba(255,255,255,0.18);border-radius:2px;"></div>
<svg style="left:876px;top:63.6px;" width="7.4" height="7.4" viewBox="0 0 16 16"><path d="M2.5 3 H13.5 L8 14 Z" fill="none" stroke="#e98e45" stroke-width="1.8" stroke-linejoin="round"/></svg>
<span class="t" style="left:887.4px;top:62.3px;line-height:10px;font-size:5.87px;color:#f0a030;">円</span>
<div style="left:904.4px;top:62.8px;width:9.8px;height:8.8px;background:rgba(60,130,140,0.35);border-radius:2px;"></div>
<svg style="left:905.3px;top:63.3px;" width="8" height="8" viewBox="0 0 16 16"><path d="M3 3.5 H13 L8 13 Z" fill="none" stroke="#22b8a6" stroke-width="1.3"/><circle cx="3" cy="3.5" r="1.9" fill="#22b8a6"/><circle cx="13" cy="3.5" r="1.9" fill="#22b8a6"/><circle cx="8" cy="13" r="1.9" fill="#22b8a6"/></svg>
<svg style="left:997.4px;top:63px;" width="8.4" height="8.4" viewBox="0 0 16 16"><path d="M1 8 C4 3 12 3 15 8 C12 13 4 13 1 8 Z" fill="none" stroke="#dfe4f0" stroke-width="1.3"/><circle cx="8" cy="8" r="2.4" fill="#dfe4f0"/></svg>
<svg style="left:1008.5px;top:63.2px;" width="8.2" height="8.2" viewBox="0 0 16 16"><path d="M1.5 4.5 H4.5 L5.5 2.5 H10.5 L11.5 4.5 H14.5 V13.5 H1.5 Z" fill="#dfe4f0"/><circle cx="8" cy="8.8" r="2.8" fill="#282828"/><circle cx="8" cy="8.8" r="1.5" fill="#dfe4f0"/></svg>
<div style="left:842.3px;top:121.2px;width:180.6px;height:416.3px;background:#303030;border-radius:3px;"></div>
<div style="left:842.3px;top:135.4px;width:15.3px;height:402.1px;background:#1d1d1d;border-radius:0 0 0 3px;"></div>
<div style="left:848px;top:123px;width:15.6px;height:9.6px;background:#262626;border-radius:2px;"></div>
<svg style="left:848.95px;top:123.55px;" width="8.5" height="8.5" viewBox="0 0 16 16"><rect x="1.5" y="2" width="13" height="5" rx="2.2" fill="#e0e0e0"/><rect x="1.5" y="9" width="13" height="5" rx="2.2" fill="#e0e0e0"/><circle cx="11.5" cy="4.5" r="1.6" fill="#303030"/><circle cx="4.5" cy="11.5" r="1.6" fill="#303030"/></svg>
<svg style="left:857.6px;top:125.1px;" width="6" height="6" viewBox="0 0 6 6"><path d="M1.25 2.30 L3 4.10 L4.75 2.30" fill="none" stroke="#c8c8c8" stroke-width="0.95" stroke-linecap="round" stroke-linejoin="round"/></svg>
<div style="left:902px;top:123px;width:62.2px;height:9.4px;background:#1d1d1d;border-radius:2px;"></div>
<svg style="left:903px;top:123.7px;" width="8" height="8" viewBox="0 0 16 16"><circle cx="6.5" cy="6.5" r="4.2" fill="none" stroke="#d8d8d8" stroke-width="1.5"/><path d="M9.6 9.6 L14.5 14.5" stroke="#d8d8d8" stroke-width="1.7"/></svg>
<span class="t" style="left:914.6px;top:122.7px;line-height:10px;font-size:5.87px;color:#6e6e6e;">検索</span>
<div style="left:1008.6px;top:123px;width:9.6px;height:9.4px;background:#242424;border-radius:2px;"></div>
<svg style="left:1010.4px;top:125px;" width="6" height="6" viewBox="0 0 6 6"><path d="M1.25 2.30 L3 4.10 L4.75 2.30" fill="none" stroke="#c8c8c8" stroke-width="0.95" stroke-linecap="round" stroke-linejoin="round"/></svg>
<div style="left:844px;top:257.3px;width:13.6px;height:13.9px;background:#303030;border-radius:2px 1px 1px 2px;"></div>
<svg style="left:846.6px;top:142.5px;" width="8.6" height="8.6" viewBox="0 0 16 16"><path d="M4 2 V8 M3 8 H5 V13.5 H3 Z" stroke="#d8d8d8" stroke-width="1.2" fill="#d8d8d8"/><path d="M8 2 L10.5 6.5 V14 M13 2 L10.5 6.5" fill="none" stroke="#d8d8d8" stroke-width="1.6"/></svg>
<svg style="left:846.6px;top:161.6px;" width="8.6" height="8.6" viewBox="0 0 16 16"><path d="M2.5 5.5 H13.5 V13.5 H2.5 Z" fill="none" stroke="#d0d0d0" stroke-width="1.4"/><path d="M4 5 V3 H8 V5 M10 5 L12.5 2.5" stroke="#d0d0d0" stroke-width="1.2" fill="none"/><path d="M13.5 7 H15 V12 H13.5" fill="#d0d0d0"/></svg>
<svg style="left:846.6px;top:176.7px;" width="8.6" height="8.6" viewBox="0 0 16 16"><rect x="2" y="2" width="12" height="4.6" fill="#d0d0d0"/><path d="M3 7.5 H13 V11 H11.5 V14 H4.5 V11 H3 Z" fill="none" stroke="#d0d0d0" stroke-width="1.2"/><path d="M6 10 H10 V12 H6 Z" fill="#d0d0d0"/></svg>
<svg style="left:846.6px;top:191.7px;" width="8.6" height="8.6" viewBox="0 0 16 16"><rect x="5" y="2" width="9.5" height="9.5" rx="1" fill="#c8c8c8"/><path d="M3.5 4.5 V13 H12 M1.5 6.5 V15 H10" fill="none" stroke="#c8c8c8" stroke-width="1.1" opacity="0.75"/><path d="M7 9.5 L9.8 5 L12.6 9.5 Z" fill="#282828"/></svg>
<svg style="left:846.6px;top:206.7px;" width="8.6" height="8.6" viewBox="0 0 16 16"><path d="M5.5 2 L9 10 H2 Z" fill="#d0d0d0"/><circle cx="10.5" cy="11" r="3" fill="none" stroke="#d0d0d0" stroke-width="1.3"/><path d="M8 3 L11 9" stroke="#d0d0d0" stroke-width="1.4"/><circle cx="13" cy="3" r="1.3" fill="#d0d0d0"/></svg>
<svg style="left:846.6px;top:221.7px;" width="8.6" height="8.6" viewBox="0 0 16 16"><circle cx="8" cy="8" r="5.8" fill="none" stroke="#d6606e" stroke-width="1.3"/><path d="M4 5 C6 4 7 6 6 7.5 C5 9 7 10 6.5 12.5 C4 12 2.5 9 4 5 Z M9 3 C11 4 10 6 12 6.5 C13.5 7 12 10 10.5 9 C9 8 10 6 9 5 Z" fill="#d6606e"/></svg>
<svg style="left:846.6px;top:240.1px;" width="8.6" height="8.6" viewBox="0 0 16 16"><rect x="1.5" y="2" width="13" height="3.6" fill="#d8d8d8"/><path d="M2.5 6.5 H13.5 V14 H2.5 Z M5.5 8.2 V10.4 H10.5 V8.2 Z" fill="#d8d8d8" fill-rule="evenodd"/></svg>
<svg style="left:846.6px;top:259.7px;" width="8.6" height="8.6" viewBox="0 0 16 16"><rect x="4.2" y="4.2" width="7.6" height="7.6" fill="#f0a050"/><path d="M1.5 4.5 V1.5 H4.5 M11.5 1.5 H14.5 V4.5 M14.5 11.5 V14.5 H11.5 M4.5 14.5 H1.5 V11.5" fill="none" stroke="#f0a050" stroke-width="1.5" opacity="0.6"/></svg>
<svg style="left:846.6px;top:274.7px;" width="8.6" height="8.6" viewBox="0 0 16 16"><path d="M13.6 1.6 A4.4 4.4 0 0 0 7.6 7 L1.8 12.4 A1.8 1.8 0 0 0 4.2 14.8 L9.8 9 A4.4 4.4 0 0 0 15 3.6 L12.4 6.2 L10.4 5.8 L10 3.8 Z" fill="#5a8ee0"/></svg>
<svg style="left:846.6px;top:289.7px;" width="8.6" height="8.6" viewBox="0 0 16 16"><path d="M3 3 L13 6 M3 3 L7 13 M3 3 L12.5 12.5" stroke="#5a8ee0" stroke-width="1.2" fill="none"/><circle cx="3" cy="3" r="1.8" fill="#5a8ee0"/><circle cx="13" cy="6" r="1.6" fill="#5a8ee0"/><circle cx="7" cy="13" r="1.6" fill="#5a8ee0"/><circle cx="12.5" cy="12.5" r="1.6" fill="#5a8ee0"/></svg>
<svg style="left:846.6px;top:304.7px;" width="8.6" height="8.6" viewBox="0 0 16 16"><circle cx="8" cy="9" r="5" fill="none" stroke="#5a8ee0" stroke-width="1.3"/><circle cx="8" cy="9" r="2" fill="#5a8ee0"/><circle cx="12.5" cy="3.5" r="1.6" fill="#5a8ee0"/></svg>
<svg style="left:846.6px;top:319.7px;" width="8.6" height="8.6" viewBox="0 0 16 16"><ellipse cx="6.5" cy="9.5" rx="4.6" ry="3.4" transform="rotate(-35 6.5 9.5)" fill="#6a90d0"/><ellipse cx="10" cy="6.5" rx="4.6" ry="3.4" transform="rotate(-35 10 6.5)" fill="none" stroke="#6a90d0" stroke-width="1.4"/></svg>
<svg style="left:846.6px;top:334.7px;" width="8.6" height="8.6" viewBox="0 0 16 16"><path d="M3 3.5 H13 L8 13 Z" fill="none" stroke="#2ec08a" stroke-width="1.3"/><circle cx="3" cy="3.5" r="1.9" fill="#2ec08a"/><circle cx="13" cy="3.5" r="1.9" fill="#2ec08a"/><circle cx="8" cy="13" r="1.9" fill="#2ec08a"/></svg>
<svg style="left:846.6px;top:349.2px;" width="8.6" height="8.6" viewBox="0 0 16 16"><circle cx="8" cy="8" r="6" fill="#e0707a"/><path d="M8 8 L8 2 A6 6 0 0 1 13.5 5.5 Z M8 8 L13.8 9.5 A6 6 0 0 1 9.5 13.8 Z M8 8 L3 11.3 A6 6 0 0 1 2.2 6.5 Z" fill="#1d1d1d" opacity="0.75"/></svg>
<svg style="left:847.9px;top:368.4px;" width="6" height="6" viewBox="0 0 6 6"><path d="M0.90 2.12 L3 4.28 L5.10 2.12" fill="none" stroke="#4a4a4a" stroke-width="0.95" stroke-linecap="round" stroke-linejoin="round"/></svg>
<svg style="left:862.7px;top:141px;" width="8.6" height="8.6" viewBox="0 0 16 16"><rect x="4.5" y="4.5" width="7" height="7" fill="#e4e4e4"/><path d="M1.5 5 V3 Q1.5 1.5 3 1.5 H5 M11 1.5 H13 Q14.5 1.5 14.5 3 V5 M14.5 11 V13 Q14.5 14.5 13 14.5 H11 M5 14.5 H3 Q1.5 14.5 1.5 13 V11" fill="none" stroke="#e4e4e4" stroke-width="1.2"/></svg>
<span class="t" style="left:875.6px;top:140.3px;line-height:10px;font-size:5.87px;color:#d8d8d8;">円</span>
<svg style="left:1008.8px;top:140.8px;" width="8.4" height="8.4" viewBox="0 0 16 16"><path d="M9 2 L14 7 L12.5 7.5 L10 10 L10 12.5 L3.5 6 L6 6 L8.5 3.5 Z" fill="none" stroke="#a8a8a8" stroke-width="1.1" stroke-linejoin="round"/><path d="M6.5 9.5 L2 14" stroke="#a8a8a8" stroke-width="1.1"/></svg>
<div style="left:863px;top:159.4px;width:14.6px;height:9.4px;background:#262626;border-radius:2px;"></div>
<svg style="left:863.8px;top:160.1px;" width="8" height="8" viewBox="0 0 16 16"><rect x="4.5" y="4.5" width="7" height="7" fill="#e4e4e4"/><path d="M1.5 5 V3 Q1.5 1.5 3 1.5 H5 M11 1.5 H13 Q14.5 1.5 14.5 3 V5 M14.5 11 V13 Q14.5 14.5 13 14.5 H11 M5 14.5 H3 Q1.5 14.5 1.5 13 V11" fill="none" stroke="#e4e4e4" stroke-width="1.2"/></svg>
<svg style="left:871.6px;top:161.4px;" width="6" height="6" viewBox="0 0 6 6"><path d="M1.25 2.30 L3 4.10 L4.75 2.30" fill="none" stroke="#c8c8c8" stroke-width="0.95" stroke-linecap="round" stroke-linejoin="round"/></svg>
<div style="left:879px;top:159.4px;width:138.8px;height:9.4px;background:#1d1d1d;border-radius:2px;"></div>
<span class="t" style="left:882.8px;top:159.2px;line-height:10px;font-size:5.87px;color:#dcdcdc;">円</span>
<div style="left:862.3px;top:175px;width:156.3px;height:149.2px;background:#3d3d3d;border-radius:2.2px;"></div>
<svg style="left:865.8px;top:179.1px;" width="6" height="6" viewBox="0 0 6 6"><path d="M1.25 2.30 L3 4.10 L4.75 2.30" fill="none" stroke="#c8c8c8" stroke-width="0.95" stroke-linecap="round" stroke-linejoin="round"/></svg>
<span class="t" style="left:873.6px;top:177px;line-height:10px;font-size:5.87px;color:#e0e0e0;">トランスフォーム</span>
<svg style="left:1007.8px;top:180.7px;" width="6.6" height="3.2" viewBox="0 0 6.6 3.2"><g fill="#555"><rect x="0" y="0.2" width="1.2" height="0.9"/><rect x="1.8" y="0.2" width="1.2" height="0.9"/><rect x="3.6" y="0.2" width="1.2" height="0.9"/><rect x="5.4" y="0.2" width="1.2" height="0.9"/><rect x="0" y="2" width="1.2" height="0.9"/><rect x="1.8" y="2" width="1.2" height="0.9"/><rect x="3.6" y="2" width="1.2" height="0.9"/><rect x="5.4" y="2" width="1.2" height="0.9"/></g></svg>
<div style="left:924.2px;top:193.2px;width:68.5px;height:9.9px;background:#545454;border-radius:1.6px 1.6px 0 0;"></div>
<span class="t" style="left:859.6px;top:192.85px;line-height:10px;font-size:5.87px;color:#d8d8d8;width:60px;text-align:right;">位置 <span class="l">X</span></span>
<span class="t" style="left:924.2px;top:192.85px;line-height:10px;font-size:5.87px;color:#e4e4e4;width:68.5px;text-align:center;"><span class="l">0 m</span></span>
<svg style="left:994.5px;top:193.15px;" width="8.4" height="8.4" viewBox="0 0 16 16"><rect x="3.6" y="8.2" width="8.6" height="6" fill="none" stroke="#a4a4a4" stroke-width="1.2"/><path d="M5.2 8.2 V4.8 A2.7 2.7 0 0 1 10.6 4.8 V5.8" fill="none" stroke="#a4a4a4" stroke-width="1.2"/><path d="M7.9 8.2 V14.2" stroke="#a4a4a4" stroke-width="0.8" opacity="0.6"/></svg>
<div style="left:1008.2px;top:196.85px;width:2px;height:2px;background:#e0e0e0;border-radius:0.4px;"></div>
<div style="left:924.2px;top:203.62px;width:68.5px;height:9.9px;background:#545454;border-radius:0;"></div>
<span class="t" style="left:859.6px;top:203.27px;line-height:10px;font-size:5.87px;color:#d8d8d8;width:60px;text-align:right;"><span class="l">Y</span></span>
<span class="t" style="left:924.2px;top:203.27px;line-height:10px;font-size:5.87px;color:#e4e4e4;width:68.5px;text-align:center;"><span class="l">0 m</span></span>
<svg style="left:994.5px;top:203.57px;" width="8.4" height="8.4" viewBox="0 0 16 16"><rect x="3.6" y="8.2" width="8.6" height="6" fill="none" stroke="#a4a4a4" stroke-width="1.2"/><path d="M5.2 8.2 V4.8 A2.7 2.7 0 0 1 10.6 4.8 V5.8" fill="none" stroke="#a4a4a4" stroke-width="1.2"/><path d="M7.9 8.2 V14.2" stroke="#a4a4a4" stroke-width="0.8" opacity="0.6"/></svg>
<div style="left:1008.2px;top:207.27px;width:2px;height:2px;background:#e0e0e0;border-radius:0.4px;"></div>
<div style="left:924.2px;top:214.04px;width:68.5px;height:9.3px;background:#545454;border-radius:0 0 1.6px 1.6px;"></div>
<span class="t" style="left:859.6px;top:213.69px;line-height:10px;font-size:5.87px;color:#d8d8d8;width:60px;text-align:right;"><span class="l">Z</span></span>
<span class="t" style="left:924.2px;top:213.69px;line-height:10px;font-size:5.87px;color:#e4e4e4;width:68.5px;text-align:center;"><span class="l">0 m</span></span>
<svg style="left:994.5px;top:213.99px;" width="8.4" height="8.4" viewBox="0 0 16 16"><rect x="3.6" y="8.2" width="8.6" height="6" fill="none" stroke="#a4a4a4" stroke-width="1.2"/><path d="M5.2 8.2 V4.8 A2.7 2.7 0 0 1 10.6 4.8 V5.8" fill="none" stroke="#a4a4a4" stroke-width="1.2"/><path d="M7.9 8.2 V14.2" stroke="#a4a4a4" stroke-width="0.8" opacity="0.6"/></svg>
<div style="left:1008.2px;top:217.69px;width:2px;height:2px;background:#e0e0e0;border-radius:0.4px;"></div>
<div style="left:924.2px;top:202.8px;width:68.5px;height:0.7px;background:#3a3a3a;"></div>
<div style="left:924.2px;top:213.22px;width:68.5px;height:0.7px;background:#3a3a3a;"></div>
<div style="left:924.2px;top:227.5px;width:68.5px;height:9.9px;background:#545454;border-radius:1.6px 1.6px 0 0;"></div>
<span class="t" style="left:859.6px;top:227.15px;line-height:10px;font-size:5.87px;color:#d8d8d8;width:60px;text-align:right;">回転 <span class="l">X</span></span>
<span class="t" style="left:924.2px;top:227.15px;line-height:10px;font-size:5.87px;color:#e4e4e4;width:68.5px;text-align:center;"><span class="l">0°</span></span>
<svg style="left:994.5px;top:227.45px;" width="8.4" height="8.4" viewBox="0 0 16 16"><rect x="3.6" y="8.2" width="8.6" height="6" fill="none" stroke="#a4a4a4" stroke-width="1.2"/><path d="M5.2 8.2 V4.8 A2.7 2.7 0 0 1 10.6 4.8 V5.8" fill="none" stroke="#a4a4a4" stroke-width="1.2"/><path d="M7.9 8.2 V14.2" stroke="#a4a4a4" stroke-width="0.8" opacity="0.6"/></svg>
<div style="left:1008.2px;top:231.15px;width:2px;height:2px;background:#e0e0e0;border-radius:0.4px;"></div>
<div style="left:924.2px;top:237.92px;width:68.5px;height:9.9px;background:#545454;border-radius:0;"></div>
<span class="t" style="left:859.6px;top:237.57px;line-height:10px;font-size:5.87px;color:#d8d8d8;width:60px;text-align:right;"><span class="l">Y</span></span>
<span class="t" style="left:924.2px;top:237.57px;line-height:10px;font-size:5.87px;color:#e4e4e4;width:68.5px;text-align:center;"><span class="l">0°</span></span>
<svg style="left:994.5px;top:237.87px;" width="8.4" height="8.4" viewBox="0 0 16 16"><rect x="3.6" y="8.2" width="8.6" height="6" fill="none" stroke="#a4a4a4" stroke-width="1.2"/><path d="M5.2 8.2 V4.8 A2.7 2.7 0 0 1 10.6 4.8 V5.8" fill="none" stroke="#a4a4a4" stroke-width="1.2"/><path d="M7.9 8.2 V14.2" stroke="#a4a4a4" stroke-width="0.8" opacity="0.6"/></svg>
<div style="left:1008.2px;top:241.57px;width:2px;height:2px;background:#e0e0e0;border-radius:0.4px;"></div>
<div style="left:924.2px;top:248.34px;width:68.5px;height:9.3px;background:#545454;border-radius:0 0 1.6px 1.6px;"></div>
<span class="t" style="left:859.6px;top:247.99px;line-height:10px;font-size:5.87px;color:#d8d8d8;width:60px;text-align:right;"><span class="l">Z</span></span>
<span class="t" style="left:924.2px;top:247.99px;line-height:10px;font-size:5.87px;color:#e4e4e4;width:68.5px;text-align:center;"><span class="l">0°</span></span>
<svg style="left:994.5px;top:248.29px;" width="8.4" height="8.4" viewBox="0 0 16 16"><rect x="3.6" y="8.2" width="8.6" height="6" fill="none" stroke="#a4a4a4" stroke-width="1.2"/><path d="M5.2 8.2 V4.8 A2.7 2.7 0 0 1 10.6 4.8 V5.8" fill="none" stroke="#a4a4a4" stroke-width="1.2"/><path d="M7.9 8.2 V14.2" stroke="#a4a4a4" stroke-width="0.8" opacity="0.6"/></svg>
<div style="left:1008.2px;top:251.99px;width:2px;height:2px;background:#e0e0e0;border-radius:0.4px;"></div>
<div style="left:924.2px;top:237.1px;width:68.5px;height:0.7px;background:#3a3a3a;"></div>
<div style="left:924.2px;top:247.52px;width:68.5px;height:0.7px;background:#3a3a3a;"></div>
<div style="left:924.2px;top:262px;width:68.5px;height:9.4px;background:#282828;border-radius:2px;"></div>
<span class="t" style="left:859.6px;top:261.7px;line-height:10px;font-size:5.87px;color:#d8d8d8;width:60px;text-align:right;">モード</span>
<span class="t" style="left:928.2px;top:261.7px;line-height:10px;font-size:5.87px;color:#e0e0e0;"><span class="l">XYZ</span> オイラー角</span>
<svg style="left:986.2px;top:263.9px;" width="6" height="6" viewBox="0 0 6 6"><path d="M1.25 2.30 L3 4.10 L4.75 2.30" fill="none" stroke="#c8c8c8" stroke-width="0.95" stroke-linecap="round" stroke-linejoin="round"/></svg>
<div style="left:1008.2px;top:265.7px;width:2px;height:2px;background:#e0e0e0;border-radius:0.4px;"></div>
<div style="left:924.2px;top:275.7px;width:68.5px;height:9.9px;background:#545454;border-radius:1.6px 1.6px 0 0;"></div>
<span class="t" style="left:859.6px;top:275.35px;line-height:10px;font-size:5.87px;color:#d8d8d8;width:60px;text-align:right;">スケール <span class="l">X</span></span>
<span class="t" style="left:924.2px;top:275.35px;line-height:10px;font-size:5.87px;color:#e4e4e4;width:68.5px;text-align:center;"><span class="l">1.000</span></span>
<svg style="left:994.5px;top:275.65px;" width="8.4" height="8.4" viewBox="0 0 16 16"><rect x="3.6" y="8.2" width="8.6" height="6" fill="none" stroke="#a4a4a4" stroke-width="1.2"/><path d="M5.2 8.2 V4.8 A2.7 2.7 0 0 1 10.6 4.8 V5.8" fill="none" stroke="#a4a4a4" stroke-width="1.2"/><path d="M7.9 8.2 V14.2" stroke="#a4a4a4" stroke-width="0.8" opacity="0.6"/></svg>
<div style="left:1008.2px;top:279.35px;width:2px;height:2px;background:#e0e0e0;border-radius:0.4px;"></div>
<div style="left:924.2px;top:286.12px;width:68.5px;height:9.9px;background:#545454;border-radius:0;"></div>
<span class="t" style="left:859.6px;top:285.77px;line-height:10px;font-size:5.87px;color:#d8d8d8;width:60px;text-align:right;"><span class="l">Y</span></span>
<span class="t" style="left:924.2px;top:285.77px;line-height:10px;font-size:5.87px;color:#e4e4e4;width:68.5px;text-align:center;"><span class="l">1.000</span></span>
<svg style="left:994.5px;top:286.07px;" width="8.4" height="8.4" viewBox="0 0 16 16"><rect x="3.6" y="8.2" width="8.6" height="6" fill="none" stroke="#a4a4a4" stroke-width="1.2"/><path d="M5.2 8.2 V4.8 A2.7 2.7 0 0 1 10.6 4.8 V5.8" fill="none" stroke="#a4a4a4" stroke-width="1.2"/><path d="M7.9 8.2 V14.2" stroke="#a4a4a4" stroke-width="0.8" opacity="0.6"/></svg>
<div style="left:1008.2px;top:289.77px;width:2px;height:2px;background:#e0e0e0;border-radius:0.4px;"></div>
<div style="left:924.2px;top:296.54px;width:68.5px;height:9.3px;background:#545454;border-radius:0 0 1.6px 1.6px;"></div>
<span class="t" style="left:859.6px;top:296.19px;line-height:10px;font-size:5.87px;color:#d8d8d8;width:60px;text-align:right;"><span class="l">Z</span></span>
<span class="t" style="left:924.2px;top:296.19px;line-height:10px;font-size:5.87px;color:#e4e4e4;width:68.5px;text-align:center;"><span class="l">1.000</span></span>
<svg style="left:994.5px;top:296.49px;" width="8.4" height="8.4" viewBox="0 0 16 16"><rect x="3.6" y="8.2" width="8.6" height="6" fill="none" stroke="#a4a4a4" stroke-width="1.2"/><path d="M5.2 8.2 V4.8 A2.7 2.7 0 0 1 10.6 4.8 V5.8" fill="none" stroke="#a4a4a4" stroke-width="1.2"/><path d="M7.9 8.2 V14.2" stroke="#a4a4a4" stroke-width="0.8" opacity="0.6"/></svg>
<div style="left:1008.2px;top:300.19px;width:2px;height:2px;background:#e0e0e0;border-radius:0.4px;"></div>
<div style="left:924.2px;top:285.3px;width:68.5px;height:0.7px;background:#3a3a3a;"></div>
<div style="left:924.2px;top:295.72px;width:68.5px;height:0.7px;background:#3a3a3a;"></div>
<svg style="left:873.4px;top:315px;" width="6" height="6" viewBox="0 0 6 6"><path d="M2.00 1.00 L4.00 3 L2.00 5.00" fill="none" stroke="#c0c0c0" stroke-width="0.8" stroke-linecap="round" stroke-linejoin="round"/></svg>
<span class="t" style="left:881px;top:313px;line-height:10px;font-size:5.87px;color:#dcdcdc;">デルタトランスフォーム</span>
<div style="left:862.3px;top:326.1px;width:156.3px;height:12.5px;background:#3d3d3d;border-radius:2.2px;"></div>
<svg style="left:865.8px;top:329.4px;" width="6" height="6" viewBox="0 0 6 6"><path d="M2.00 1.00 L4.00 3 L2.00 5.00" fill="none" stroke="#c0c0c0" stroke-width="0.8" stroke-linecap="round" stroke-linejoin="round"/></svg>
<span class="t" style="left:873.2px;top:327.4px;line-height:10px;font-size:5.87px;color:#dcdcdc;">関係</span>
<svg style="left:1007.8px;top:331px;" width="6.6" height="3.2" viewBox="0 0 6.6 3.2"><g fill="#4c4c4c"><rect x="0" y="0.2" width="1.2" height="0.9"/><rect x="1.8" y="0.2" width="1.2" height="0.9"/><rect x="3.6" y="0.2" width="1.2" height="0.9"/><rect x="5.4" y="0.2" width="1.2" height="0.9"/><rect x="0" y="2" width="1.2" height="0.9"/><rect x="1.8" y="2" width="1.2" height="0.9"/><rect x="3.6" y="2" width="1.2" height="0.9"/><rect x="5.4" y="2" width="1.2" height="0.9"/></g></svg>
<div style="left:862.3px;top:340.5px;width:156.3px;height:12.5px;background:#3d3d3d;border-radius:2.2px;"></div>
<svg style="left:865.8px;top:343.8px;" width="6" height="6" viewBox="0 0 6 6"><path d="M2.00 1.00 L4.00 3 L2.00 5.00" fill="none" stroke="#c0c0c0" stroke-width="0.8" stroke-linecap="round" stroke-linejoin="round"/></svg>
<span class="t" style="left:873.2px;top:341.8px;line-height:10px;font-size:5.87px;color:#dcdcdc;">コレクション</span>
<svg style="left:1007.8px;top:345.4px;" width="6.6" height="3.2" viewBox="0 0 6.6 3.2"><g fill="#4c4c4c"><rect x="0" y="0.2" width="1.2" height="0.9"/><rect x="1.8" y="0.2" width="1.2" height="0.9"/><rect x="3.6" y="0.2" width="1.2" height="0.9"/><rect x="5.4" y="0.2" width="1.2" height="0.9"/><rect x="0" y="2" width="1.2" height="0.9"/><rect x="1.8" y="2" width="1.2" height="0.9"/><rect x="3.6" y="2" width="1.2" height="0.9"/><rect x="5.4" y="2" width="1.2" height="0.9"/></g></svg>
<div style="left:862.3px;top:354.9px;width:156.3px;height:12.5px;background:#3d3d3d;border-radius:2.2px;"></div>
<svg style="left:865.8px;top:358.2px;" width="6" height="6" viewBox="0 0 6 6"><path d="M2.00 1.00 L4.00 3 L2.00 5.00" fill="none" stroke="#c0c0c0" stroke-width="0.8" stroke-linecap="round" stroke-linejoin="round"/></svg>
<span class="t" style="left:873.2px;top:356.2px;line-height:10px;font-size:5.87px;color:#dcdcdc;">インスタンス化</span>
<svg style="left:1007.8px;top:359.8px;" width="6.6" height="3.2" viewBox="0 0 6.6 3.2"><g fill="#4c4c4c"><rect x="0" y="0.2" width="1.2" height="0.9"/><rect x="1.8" y="0.2" width="1.2" height="0.9"/><rect x="3.6" y="0.2" width="1.2" height="0.9"/><rect x="5.4" y="0.2" width="1.2" height="0.9"/><rect x="0" y="2" width="1.2" height="0.9"/><rect x="1.8" y="2" width="1.2" height="0.9"/><rect x="3.6" y="2" width="1.2" height="0.9"/><rect x="5.4" y="2" width="1.2" height="0.9"/></g></svg>
<div style="left:862.3px;top:369.3px;width:156.3px;height:12.5px;background:#3d3d3d;border-radius:2.2px;"></div>
<svg style="left:865.8px;top:372.6px;" width="6" height="6" viewBox="0 0 6 6"><path d="M2.00 1.00 L4.00 3 L2.00 5.00" fill="none" stroke="#c0c0c0" stroke-width="0.8" stroke-linecap="round" stroke-linejoin="round"/></svg>
<span class="t" style="left:873.2px;top:370.6px;line-height:10px;font-size:5.87px;color:#dcdcdc;">モーションパス</span>
<svg style="left:1007.8px;top:374.2px;" width="6.6" height="3.2" viewBox="0 0 6.6 3.2"><g fill="#4c4c4c"><rect x="0" y="0.2" width="1.2" height="0.9"/><rect x="1.8" y="0.2" width="1.2" height="0.9"/><rect x="3.6" y="0.2" width="1.2" height="0.9"/><rect x="5.4" y="0.2" width="1.2" height="0.9"/><rect x="0" y="2" width="1.2" height="0.9"/><rect x="1.8" y="2" width="1.2" height="0.9"/><rect x="3.6" y="2" width="1.2" height="0.9"/><rect x="5.4" y="2" width="1.2" height="0.9"/></g></svg>
<div style="left:862.3px;top:383.7px;width:156.3px;height:12.5px;background:#3d3d3d;border-radius:2.2px;"></div>
<svg style="left:865.8px;top:387px;" width="6" height="6" viewBox="0 0 6 6"><path d="M2.00 1.00 L4.00 3 L2.00 5.00" fill="none" stroke="#c0c0c0" stroke-width="0.8" stroke-linecap="round" stroke-linejoin="round"/></svg>
<span class="t" style="left:873.2px;top:385px;line-height:10px;font-size:5.87px;color:#dcdcdc;">シェーディング</span>
<svg style="left:1007.8px;top:388.6px;" width="6.6" height="3.2" viewBox="0 0 6.6 3.2"><g fill="#4c4c4c"><rect x="0" y="0.2" width="1.2" height="0.9"/><rect x="1.8" y="0.2" width="1.2" height="0.9"/><rect x="3.6" y="0.2" width="1.2" height="0.9"/><rect x="5.4" y="0.2" width="1.2" height="0.9"/><rect x="0" y="2" width="1.2" height="0.9"/><rect x="1.8" y="2" width="1.2" height="0.9"/><rect x="3.6" y="2" width="1.2" height="0.9"/><rect x="5.4" y="2" width="1.2" height="0.9"/></g></svg>
<div style="left:862.3px;top:398.1px;width:156.3px;height:12.5px;background:#3d3d3d;border-radius:2.2px;"></div>
<svg style="left:865.8px;top:401.4px;" width="6" height="6" viewBox="0 0 6 6"><path d="M2.00 1.00 L4.00 3 L2.00 5.00" fill="none" stroke="#c0c0c0" stroke-width="0.8" stroke-linecap="round" stroke-linejoin="round"/></svg>
<span class="t" style="left:873.2px;top:399.4px;line-height:10px;font-size:5.87px;color:#dcdcdc;">可視性</span>
<svg style="left:1007.8px;top:403px;" width="6.6" height="3.2" viewBox="0 0 6.6 3.2"><g fill="#4c4c4c"><rect x="0" y="0.2" width="1.2" height="0.9"/><rect x="1.8" y="0.2" width="1.2" height="0.9"/><rect x="3.6" y="0.2" width="1.2" height="0.9"/><rect x="5.4" y="0.2" width="1.2" height="0.9"/><rect x="0" y="2" width="1.2" height="0.9"/><rect x="1.8" y="2" width="1.2" height="0.9"/><rect x="3.6" y="2" width="1.2" height="0.9"/><rect x="5.4" y="2" width="1.2" height="0.9"/></g></svg>
<div style="left:862.3px;top:412.5px;width:156.3px;height:12.5px;background:#3d3d3d;border-radius:2.2px;"></div>
<svg style="left:865.8px;top:415.8px;" width="6" height="6" viewBox="0 0 6 6"><path d="M2.00 1.00 L4.00 3 L2.00 5.00" fill="none" stroke="#c0c0c0" stroke-width="0.8" stroke-linecap="round" stroke-linejoin="round"/></svg>
<span class="t" style="left:873.2px;top:413.8px;line-height:10px;font-size:5.87px;color:#dcdcdc;">ビューポート表示</span>
<svg style="left:1007.8px;top:417.4px;" width="6.6" height="3.2" viewBox="0 0 6.6 3.2"><g fill="#4c4c4c"><rect x="0" y="0.2" width="1.2" height="0.9"/><rect x="1.8" y="0.2" width="1.2" height="0.9"/><rect x="3.6" y="0.2" width="1.2" height="0.9"/><rect x="5.4" y="0.2" width="1.2" height="0.9"/><rect x="0" y="2" width="1.2" height="0.9"/><rect x="1.8" y="2" width="1.2" height="0.9"/><rect x="3.6" y="2" width="1.2" height="0.9"/><rect x="5.4" y="2" width="1.2" height="0.9"/></g></svg>
<div style="left:862.3px;top:426.9px;width:156.3px;height:12.5px;background:#3d3d3d;border-radius:2.2px;"></div>
<svg style="left:865.8px;top:430.2px;" width="6" height="6" viewBox="0 0 6 6"><path d="M2.00 1.00 L4.00 3 L2.00 5.00" fill="none" stroke="#c0c0c0" stroke-width="0.8" stroke-linecap="round" stroke-linejoin="round"/></svg>
<span class="t" style="left:873.2px;top:428.2px;line-height:10px;font-size:5.87px;color:#dcdcdc;">ラインアート</span>
<svg style="left:1007.8px;top:431.8px;" width="6.6" height="3.2" viewBox="0 0 6.6 3.2"><g fill="#4c4c4c"><rect x="0" y="0.2" width="1.2" height="0.9"/><rect x="1.8" y="0.2" width="1.2" height="0.9"/><rect x="3.6" y="0.2" width="1.2" height="0.9"/><rect x="5.4" y="0.2" width="1.2" height="0.9"/><rect x="0" y="2" width="1.2" height="0.9"/><rect x="1.8" y="2" width="1.2" height="0.9"/><rect x="3.6" y="2" width="1.2" height="0.9"/><rect x="5.4" y="2" width="1.2" height="0.9"/></g></svg>
<div style="left:862.3px;top:441.3px;width:156.3px;height:12.5px;background:#3d3d3d;border-radius:2.2px;"></div>
<svg style="left:865.8px;top:444.6px;" width="6" height="6" viewBox="0 0 6 6"><path d="M2.00 1.00 L4.00 3 L2.00 5.00" fill="none" stroke="#c0c0c0" stroke-width="0.8" stroke-linecap="round" stroke-linejoin="round"/></svg>
<span class="t" style="left:873.2px;top:442.6px;line-height:10px;font-size:5.87px;color:#dcdcdc;">アニメーション</span>
<svg style="left:1007.8px;top:446.2px;" width="6.6" height="3.2" viewBox="0 0 6.6 3.2"><g fill="#4c4c4c"><rect x="0" y="0.2" width="1.2" height="0.9"/><rect x="1.8" y="0.2" width="1.2" height="0.9"/><rect x="3.6" y="0.2" width="1.2" height="0.9"/><rect x="5.4" y="0.2" width="1.2" height="0.9"/><rect x="0" y="2" width="1.2" height="0.9"/><rect x="1.8" y="2" width="1.2" height="0.9"/><rect x="3.6" y="2" width="1.2" height="0.9"/><rect x="5.4" y="2" width="1.2" height="0.9"/></g></svg>
<div style="left:862.3px;top:455.7px;width:156.3px;height:12.5px;background:#3d3d3d;border-radius:2.2px;"></div>
<svg style="left:865.8px;top:459px;" width="6" height="6" viewBox="0 0 6 6"><path d="M2.00 1.00 L4.00 3 L2.00 5.00" fill="none" stroke="#c0c0c0" stroke-width="0.8" stroke-linecap="round" stroke-linejoin="round"/></svg>
<span class="t" style="left:873.2px;top:457px;line-height:10px;font-size:5.87px;color:#dcdcdc;">カスタムプロパティ</span>
<svg style="left:1007.8px;top:460.6px;" width="6.6" height="3.2" viewBox="0 0 6.6 3.2"><g fill="#4c4c4c"><rect x="0" y="0.2" width="1.2" height="0.9"/><rect x="1.8" y="0.2" width="1.2" height="0.9"/><rect x="3.6" y="0.2" width="1.2" height="0.9"/><rect x="5.4" y="0.2" width="1.2" height="0.9"/><rect x="0" y="2" width="1.2" height="0.9"/><rect x="1.8" y="2" width="1.2" height="0.9"/><rect x="3.6" y="2" width="1.2" height="0.9"/><rect x="5.4" y="2" width="1.2" height="0.9"/></g></svg>
<div style="left:1.1px;top:500.9px;width:839.7px;height:36.8px;background:#303030;border-radius:3px;"></div>
<div style="left:1.1px;top:515.2px;width:839.7px;height:12.1px;background:#1d1d1d;"></div>
<svg style="left:0px;top:0px;" width="1024" height="550" viewBox="0 0 1024 550"><defs><clipPath id="tlc"><path d="M1.1 527.3 H840.8 V534.6 Q840.8 537.6 837.8 537.6 H4.1 Q1.1 537.6 1.1 534.6 Z"/></clipPath></defs><g clip-path="url(#tlc)"><rect x="0" y="527" width="845" height="11" fill="#2d2d2d"/><rect x="809.40" y="527" width="40" height="11" fill="#222"/><rect x="0" y="527" width="29.15" height="11" fill="#262626"/><path d="M29.15 527 V538 M66.60 527 V538 M104.05 527 V538 M141.50 527 V538 M178.96 527 V538 M216.41 527 V538 M253.86 527 V538 M291.31 527 V538 M328.76 527 V538 M366.22 527 V538 M403.67 527 V538 M441.12 527 V538 M478.57 527 V538 M516.02 527 V538 M553.48 527 V538 M590.93 527 V538 M628.38 527 V538 M665.83 527 V538 M703.28 527 V538 M740.74 527 V538 M778.19 527 V538 M815.64 527 V538 M853.09 527 V538" stroke="#202020" stroke-width="0.8"/><path d="M47.87 527 V538 M85.33 527 V538 M122.78 527 V538 M160.23 527 V538 M197.68 527 V538 M235.13 527 V538 M272.59 527 V538 M310.04 527 V538 M347.49 527 V538 M384.94 527 V538 M422.39 527 V538 M459.85 527 V538 M497.30 527 V538 M534.75 527 V538 M572.20 527 V538 M609.65 527 V538 M647.11 527 V538 M684.56 527 V538 M722.01 527 V538 M759.46 527 V538 M796.91 527 V538 M834.37 527 V538" stroke="#262626" stroke-width="0.7"/><path d="M809.40 527 V538" stroke="#141414" stroke-width="0.9"/><rect x="837.6" y="528.6" width="1.2" height="6.4" rx="0.6" fill="#3a3a3a"/><rect x="8" y="534.3" width="825.4" height="1.6" rx="0.8" fill="#3c3c3c"/></g></svg>
<span class="t" style="left:56.6px;top:516.9px;line-height:10px;font-size:5.75px;color:#8e8e8e;font-weight:400;width:20px;text-align:center;"><span class="l">12</span></span>
<span class="t" style="left:94.052px;top:516.9px;line-height:10px;font-size:5.75px;color:#8e8e8e;font-weight:400;width:20px;text-align:center;"><span class="l">24</span></span>
<span class="t" style="left:131.504px;top:516.9px;line-height:10px;font-size:5.75px;color:#8e8e8e;font-weight:400;width:20px;text-align:center;"><span class="l">36</span></span>
<span class="t" style="left:168.956px;top:516.9px;line-height:10px;font-size:5.75px;color:#8e8e8e;font-weight:400;width:20px;text-align:center;"><span class="l">48</span></span>
<span class="t" style="left:206.408px;top:516.9px;line-height:10px;font-size:5.75px;color:#8e8e8e;font-weight:400;width:20px;text-align:center;"><span class="l">60</span></span>
<span class="t" style="left:243.86px;top:516.9px;line-height:10px;font-size:5.75px;color:#8e8e8e;font-weight:400;width:20px;text-align:center;"><span class="l">72</span></span>
<span class="t" style="left:281.312px;top:516.9px;line-height:10px;font-size:5.75px;color:#8e8e8e;font-weight:400;width:20px;text-align:center;"><span class="l">84</span></span>
<span class="t" style="left:318.764px;top:516.9px;line-height:10px;font-size:5.75px;color:#8e8e8e;font-weight:400;width:20px;text-align:center;"><span class="l">96</span></span>
<span class="t" style="left:356.216px;top:516.9px;line-height:10px;font-size:5.75px;color:#8e8e8e;font-weight:400;width:20px;text-align:center;"><span class="l">108</span></span>
<span class="t" style="left:393.668px;top:516.9px;line-height:10px;font-size:5.75px;color:#8e8e8e;font-weight:400;width:20px;text-align:center;"><span class="l">120</span></span>
<span class="t" style="left:431.12px;top:516.9px;line-height:10px;font-size:5.75px;color:#8e8e8e;font-weight:400;width:20px;text-align:center;"><span class="l">132</span></span>
<span class="t" style="left:468.572px;top:516.9px;line-height:10px;font-size:5.75px;color:#8e8e8e;font-weight:400;width:20px;text-align:center;"><span class="l">144</span></span>
<span class="t" style="left:506.024px;top:516.9px;line-height:10px;font-size:5.75px;color:#8e8e8e;font-weight:400;width:20px;text-align:center;"><span class="l">156</span></span>
<span class="t" style="left:543.476px;top:516.9px;line-height:10px;font-size:5.75px;color:#8e8e8e;font-weight:400;width:20px;text-align:center;"><span class="l">168</span></span>
<span class="t" style="left:580.928px;top:516.9px;line-height:10px;font-size:5.75px;color:#8e8e8e;font-weight:400;width:20px;text-align:center;"><span class="l">180</span></span>
<span class="t" style="left:618.38px;top:516.9px;line-height:10px;font-size:5.75px;color:#8e8e8e;font-weight:400;width:20px;text-align:center;"><span class="l">192</span></span>
<span class="t" style="left:655.832px;top:516.9px;line-height:10px;font-size:5.75px;color:#8e8e8e;font-weight:400;width:20px;text-align:center;"><span class="l">204</span></span>
<span class="t" style="left:693.284px;top:516.9px;line-height:10px;font-size:5.75px;color:#8e8e8e;font-weight:400;width:20px;text-align:center;"><span class="l">216</span></span>
<span class="t" style="left:730.736px;top:516.9px;line-height:10px;font-size:5.75px;color:#8e8e8e;font-weight:400;width:20px;text-align:center;"><span class="l">228</span></span>
<span class="t" style="left:768.188px;top:516.9px;line-height:10px;font-size:5.75px;color:#8e8e8e;font-weight:400;width:20px;text-align:center;"><span class="l">240</span></span>
<span class="t" style="left:805.64px;top:516.9px;line-height:10px;font-size:5.75px;color:#8e8e8e;font-weight:400;width:20px;text-align:center;"><span class="l">252</span></span>
<div style="left:31.719px;top:520px;width:1.1px;height:17.4px;background:#4772b3;"></div>
<div style="left:26.169px;top:516.2px;width:12.2px;height:9.6px;background:#4772b3;border-radius:2px;"></div>
<svg style="left:29.269px;top:525.4px;" width="6" height="3" viewBox="0 0 6 3"><path d="M0 0 H6 L3 2.6 Z" fill="#4772b3"/></svg>
<span class="t" style="left:26.269px;top:516.2px;line-height:10px;font-size:5.9px;color:#ffffff;font-weight:bold;width:12px;text-align:center;"><span class="l">1</span></span>
<svg style="left:-0.2px;top:528.4px;" width="6" height="6" viewBox="0 0 6 6"><path d="M2.10 1.20 L3.90 3 L2.10 4.80" fill="none" stroke="#9a9a9a" stroke-width="0.8" stroke-linecap="round" stroke-linejoin="round"/></svg>
<div style="left:6px;top:503.2px;width:16.3px;height:9.4px;background:#282828;border-radius:2px;"></div>
<svg style="left:7.1px;top:503.7px;" width="8.4" height="8.4" viewBox="0 0 16 16"><circle cx="8" cy="8" r="6.4" fill="#e6e6e6"/><path d="M8 3.5 V8 L5 10.5" fill="none" stroke="#282828" stroke-width="1.6"/><path d="M8 1.6 A6.4 6.4 0 0 1 8 14.4 Z" fill="#282828" opacity="0.0"/></svg>
<svg style="left:16px;top:505.1px;" width="6" height="6" viewBox="0 0 6 6"><path d="M1.25 2.30 L3 4.10 L4.75 2.30" fill="none" stroke="#c8c8c8" stroke-width="0.95" stroke-linecap="round" stroke-linejoin="round"/></svg>
<span class="t" style="left:28.8px;top:502.9px;line-height:10px;font-size:5.87px;color:#dadada;">ビュー</span>
<span class="t" style="left:54.8px;top:502.9px;line-height:10px;font-size:5.87px;color:#dadada;">マーカー</span>
<div style="left:85.6px;top:503.2px;width:24px;height:9.4px;background:#282828;border-radius:2px;"></div>
<span class="t" style="left:88.8px;top:502.9px;line-height:10px;font-size:5.87px;color:#dadada;">再生</span>
<svg style="left:102.8px;top:505.1px;" width="6" height="6" viewBox="0 0 6 6"><path d="M1.25 2.30 L3 4.10 L4.75 2.30" fill="none" stroke="#c8c8c8" stroke-width="0.95" stroke-linecap="round" stroke-linejoin="round"/></svg>
<div style="left:342.2px;top:503.2px;width:10.2px;height:9.4px;background:#545454;border-radius:2px 0 0 2px;"></div>
<svg style="left:343.1px;top:503.7px;" width="8.4" height="8.4" viewBox="0 0 16 16"><circle cx="8" cy="8" r="4.6" fill="none" stroke="#b8b8b8" stroke-width="1.3"/></svg>
<div style="left:352.8px;top:503.2px;width:9.6px;height:9.4px;background:#383838;border-radius:0 2px 2px 0;"></div>
<svg style="left:354.6px;top:505.1px;" width="6" height="6" viewBox="0 0 6 6"><path d="M1.25 2.30 L3 4.10 L4.75 2.30" fill="none" stroke="#5a5a5a" stroke-width="0.95" stroke-linecap="round" stroke-linejoin="round"/></svg>
<div style="left:366.2px;top:503.2px;width:63.1px;height:9.4px;background:#545454;border-radius:2px;"></div>
<svg style="left:367.66px;top:504.1px;" width="7.6" height="7.6" viewBox="0 0 16 16"><path d="M3 3 V13" stroke="#ececec" stroke-width="1.8"/><path d="M13 3 V13 L5 8 Z" fill="#ececec"/></svg>
<svg style="left:378.18px;top:504.1px;" width="7.6" height="7.6" viewBox="0 0 16 16"><path d="M5 4 L9 8 L5 12 L1 8 Z" fill="#ececec"/><path d="M15 3.5 V12.5 L9 8 Z" fill="#ececec"/></svg>
<div style="left:376.52px;top:503.2px;width:0.4px;height:9.4px;background:#484848;"></div>
<svg style="left:388.4px;top:503.8px;" width="8.2" height="8.2" viewBox="0 0 16 16"><path d="M12.5 2 V14 L3 8 Z" fill="#ececec"/></svg>
<div style="left:387.04px;top:503.2px;width:0.4px;height:9.4px;background:#484848;"></div>
<svg style="left:398.92px;top:503.8px;" width="8.2" height="8.2" viewBox="0 0 16 16"><path d="M3.5 2 V14 L13 8 Z" fill="#ececec"/></svg>
<div style="left:397.56px;top:503.2px;width:0.4px;height:9.4px;background:#484848;"></div>
<svg style="left:409.74px;top:504.1px;" width="7.6" height="7.6" viewBox="0 0 16 16"><path d="M11 4 L15 8 L11 12 L7 8 Z" fill="#ececec"/><path d="M1 3.5 V12.5 L7 8 Z" fill="#ececec"/></svg>
<div style="left:408.08px;top:503.2px;width:0.4px;height:9.4px;background:#484848;"></div>
<svg style="left:420.26px;top:504.1px;" width="7.6" height="7.6" viewBox="0 0 16 16"><path d="M13 3 V13" stroke="#ececec" stroke-width="1.8"/><path d="M3 3 V13 L11 8 Z" fill="#ececec"/></svg>
<div style="left:418.6px;top:503.2px;width:0.4px;height:9.4px;background:#484848;"></div>
<div style="left:433px;top:503.2px;width:20.8px;height:9.4px;background:#545454;border-radius:2px 0 0 2px;"></div>
<svg style="left:434.5px;top:504.2px;" width="7.4" height="7.4" viewBox="0 0 16 16"><path d="M9 3.5 V12.5 L2.5 8 Z" fill="#ececec"/><path d="M11.5 4 V12" stroke="#ececec" stroke-width="2"/></svg>
<svg style="left:444.9px;top:504.2px;" width="7.4" height="7.4" viewBox="0 0 16 16"><path d="M7 3.5 V12.5 L13.5 8 Z" fill="#ececec"/><path d="M4.5 4 V12" stroke="#ececec" stroke-width="2"/></svg>
<div style="left:443.2px;top:503.2px;width:0.4px;height:9.4px;background:#484848;"></div>
<div style="left:454.2px;top:503.2px;width:9.4px;height:9.4px;background:#282828;border-radius:0 2px 2px 0;"></div>
<svg style="left:455.9px;top:505.1px;" width="6" height="6" viewBox="0 0 6 6"><path d="M1.25 2.30 L3 4.10 L4.75 2.30" fill="none" stroke="#c8c8c8" stroke-width="0.95" stroke-linecap="round" stroke-linejoin="round"/></svg>
<div style="left:467.4px;top:503.2px;width:10.2px;height:9.4px;background:#545454;border-radius:2px 0 0 2px;"></div>
<svg style="left:468.4px;top:503.8px;" width="8.2" height="8.2" viewBox="0 0 16 16"><path d="M3 13 V8 A5 5 0 0 1 13 8 V13 Z" fill="none" stroke="#9a9a9a" stroke-width="1.4"/><path d="M8 7 V11 M5.5 11 H10.5" stroke="#9a9a9a" stroke-width="1.3"/></svg>
<div style="left:478px;top:503.2px;width:10px;height:9.4px;background:#282828;border-radius:0 2px 2px 0;"></div>
<svg style="left:480px;top:505.1px;" width="6" height="6" viewBox="0 0 6 6"><path d="M1.25 2.30 L3 4.10 L4.75 2.30" fill="none" stroke="#c8c8c8" stroke-width="0.95" stroke-linecap="round" stroke-linejoin="round"/></svg>
<div style="left:660.4px;top:503.2px;width:39.2px;height:9.4px;background:#545454;border-radius:2px;"></div>
<span class="t" style="left:660.4px;top:502.9px;line-height:10px;font-size:5.87px;color:#e8e8e8;width:39.2px;text-align:center;"><span class="l">1</span></span>
<div style="left:703.2px;top:503.2px;width:9.8px;height:9.4px;background:#282828;border-radius:2px 0 0 2px;"></div>
<svg style="left:703.9px;top:503.7px;" width="8.4" height="8.4" viewBox="0 0 16 16"><circle cx="8" cy="9" r="5" fill="none" stroke="#d8d8d8" stroke-width="1.3"/><path d="M8 9 V6 M6.5 2 H9.5 M8 2 V4 M12 4 L13 5" stroke="#d8d8d8" stroke-width="1.2" fill="none"/></svg>
<div style="left:713.3px;top:503.2px;width:46.3px;height:9.4px;background:#545454;"></div>
<span class="t" style="left:721.8px;top:502.9px;line-height:10px;font-size:5.87px;color:#e0e0e0;">開始</span>
<span class="t" style="left:736.5px;top:502.9px;line-height:10px;font-size:5.87px;color:#e8e8e8;width:16px;text-align:right;"><span class="l">1</span></span>
<div style="left:760.2px;top:503.2px;width:46px;height:9.4px;background:#545454;border-radius:0 2px 2px 0;"></div>
<span class="t" style="left:767.8px;top:502.9px;line-height:10px;font-size:5.87px;color:#e0e0e0;">終了</span>
<span class="t" style="left:783px;top:502.9px;line-height:10px;font-size:5.87px;color:#e8e8e8;width:16.6px;text-align:right;"><span class="l">250</span></span>
<div style="left:815.6px;top:503.2px;width:10.2px;height:9.4px;background:#4772b3;border-radius:2px 0 0 2px;"></div>
<svg style="left:816.5px;top:503.7px;" width="8.4" height="8.4" viewBox="0 0 16 16"><circle cx="9.5" cy="6.5" r="5" fill="#f4f4f4"/><path d="M4.6 5.6 A5 5 0 1 0 10.4 11.4" fill="none" stroke="#f4f4f4" stroke-width="1.4"/></svg>
<div style="left:826.2px;top:503.2px;width:9.6px;height:9.4px;background:#282828;border-radius:0 2px 2px 0;"></div>
<svg style="left:828px;top:505.1px;" width="6" height="6" viewBox="0 0 6 6"><path d="M1.25 2.30 L3 4.10 L4.75 2.30" fill="none" stroke="#c8c8c8" stroke-width="0.95" stroke-linecap="round" stroke-linejoin="round"/></svg>
<svg style="left:1.9px;top:539.5px;" width="8.6" height="8.6" viewBox="0 0 16 16"><rect x="3.5" y="1.5" width="9" height="13" rx="3.6" fill="none" stroke="#969696" stroke-width="1.2"/><path d="M4 2 H8 V7.5 H4 Z" fill="#969696"/></svg>
<span class="t" style="left:10.8px;top:538.8px;line-height:10px;font-size:5.87px;color:#969696;">選択</span>
<svg style="left:25.9px;top:539.5px;" width="8.6" height="8.6" viewBox="0 0 16 16"><rect x="3.5" y="1.5" width="9" height="13" rx="3.6" fill="none" stroke="#969696" stroke-width="1.2"/><rect x="6.6" y="2.5" width="2.8" height="5.5" rx="1" fill="#969696"/></svg>
<span class="t" style="left:34.8px;top:538.8px;line-height:10px;font-size:5.87px;color:#969696;">ビューを回転</span>
<svg style="left:73.1px;top:539.5px;" width="8.6" height="8.6" viewBox="0 0 16 16"><rect x="3.5" y="1.5" width="9" height="13" rx="3.6" fill="none" stroke="#969696" stroke-width="1.2"/><path d="M8 2 H12 V7.5 H8 Z" fill="#969696"/></svg>
<span class="t" style="left:81.8px;top:538.8px;line-height:10px;font-size:5.87px;color:#969696;">オプション</span>
<svg style="left:988.3px;top:539.7px;" width="8.6" height="8.6" viewBox="0 0 16 16"><circle cx="8" cy="8" r="5.8" fill="none" stroke="#9a9a9a" stroke-width="1.2"/><ellipse cx="8" cy="8" rx="2.6" ry="5.8" fill="none" stroke="#9a9a9a" stroke-width="1"/><path d="M2.2 8 H13.8 M3.2 5 H12.8 M3.2 11 H12.8" stroke="#9a9a9a" stroke-width="0.9"/></svg>
<span class="t" style="left:995.6px;top:541px;line-height:10px;font-size:3.6px;color:#8a8a8a;"><span class="l">1</span></span>
<div style="left:999.4px;top:540.4px;width:0.6px;height:7px;background:#5a5a5a;"></div>
<span class="t" style="left:1002.6px;top:538.8px;line-height:10px;font-size:5.87px;color:#9a9a9a;"><span class="l">5.0.1</span></span>
</body></html>
